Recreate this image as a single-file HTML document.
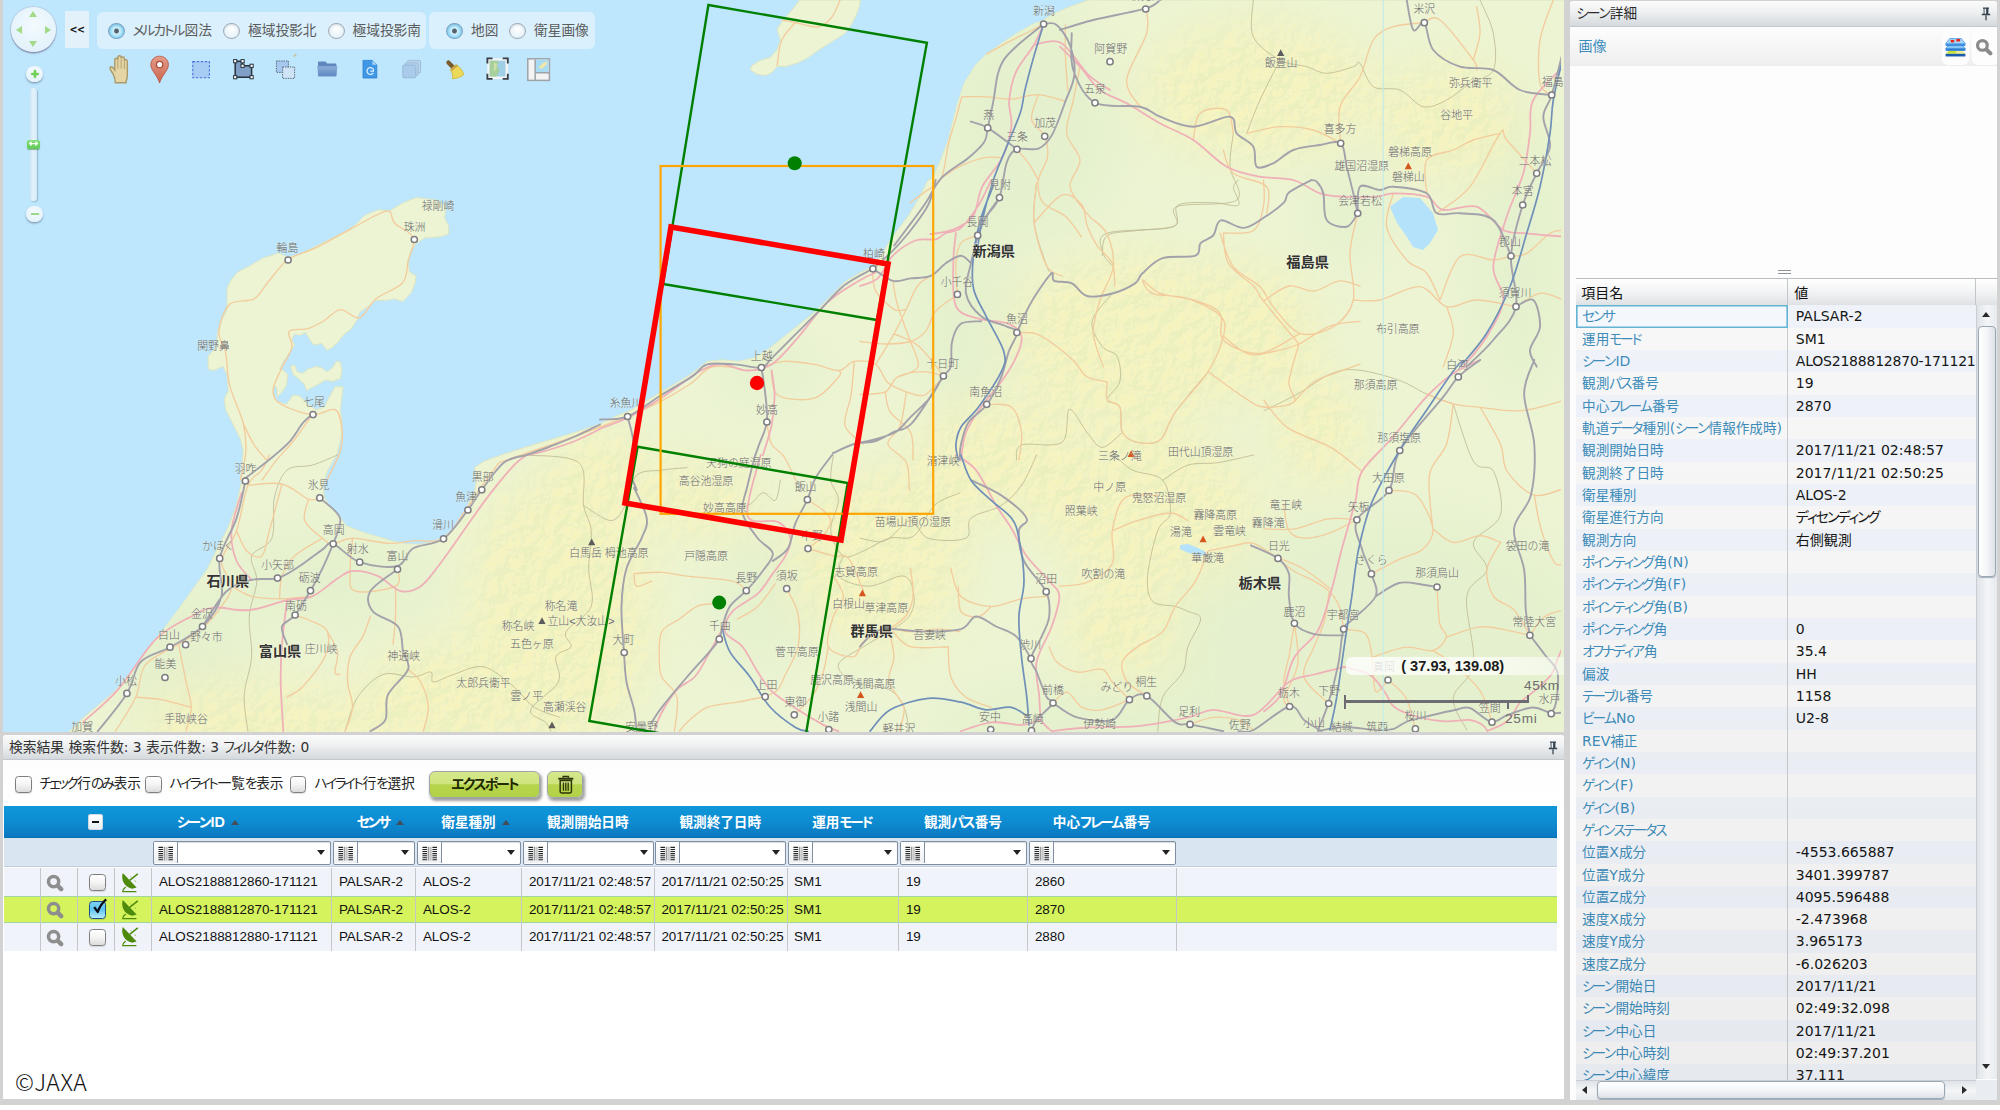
<!DOCTYPE html>
<html lang="ja"><head><meta charset="utf-8"><title>シーン詳細</title>
<style>
html,body{margin:0;padding:0;}
body{width:2000px;height:1110px;overflow:hidden;background:#d2d2d2;position:relative;font-family:"Liberation Sans","Noto Sans CJK JP",sans-serif;font-size:13.4px;color:#222;}
#map{position:absolute;left:3px;top:0;width:1561px;height:732px;overflow:hidden;background:#bee7fd;}
.mapsvg{position:absolute;left:0;top:0;}
.k{letter-spacing:-2px;font-kerning:none;margin-right:1.3px;}
.l{font-family:"DejaVu Sans",sans-serif;font-size:14px;}
.jp{font-feature-settings:"palt";}
#rp{position:absolute;left:1570px;top:1px;width:427.4px;height:1099px;background:#fdfdfd;font-feature-settings:"palt";border-radius:3px 3px 0 0;overflow:hidden;}
.rp-head{position:absolute;left:0;top:0;width:100%;height:26px;background:linear-gradient(#fbfbfb,#eef0f1 45%,#d4d9dd);border-bottom:1px solid #c3c9ce;box-sizing:border-box;}
.rp-title{position:absolute;left:6.5px;top:4px;font-size:13.6px;line-height:18px;color:#2b2b2b;}
.pin{position:absolute;}
.rp-img{position:absolute;left:0;top:26px;width:100%;height:39px;background:linear-gradient(#fdfdfd,#f6f6f6 50%,#eeeeee);}
.rp-img .lbl{position:absolute;left:8.5px;top:9px;font-size:14px;line-height:20px;color:#3c8cbc;}
.ibtn{position:absolute;top:3px;width:26.5px;height:35px;background:#fdfdfd;border-radius:6px;}
.rp-split{position:absolute;left:208px;top:268.5px;width:13px;}
.rp-split i{display:block;height:1px;background:#8e9499;margin-bottom:2px;}
.pg{position:absolute;left:6.3px;top:277px;width:421.5px;height:822px;}
.pg-head{position:absolute;left:0;top:0;width:100%;height:27px;border-top:1px solid #b9bdc1;background:linear-gradient(#ffffff,#f2f3f4 50%,#dfe2e5);font-size:14px;color:#111;box-sizing:border-box;}
.pg-head div{position:absolute;top:0;height:26px;line-height:29px;box-sizing:border-box;padding-left:5px;border-right:1px solid #c2c6ca;}
.pg-head .c1{left:0;width:212px;}
.pg-head .c2{left:212px;width:187.3px;padding-left:6px;}
.pg-head .c3{left:399.3px;width:22px;border-right:0;}
.pg-body{position:absolute;left:0;top:27.3px;width:399.3px;height:774.7px;overflow:hidden;background:#f3f3f3;}
.pg-body .r{position:relative;height:22.33px;line-height:23.6px;white-space:nowrap;}
.pg-body .c1{position:absolute;left:0;top:0;width:211.5px;height:100%;padding-left:5.8px;box-sizing:border-box;color:#3d8cba;background:#f7f7f7;border-right:1px solid #c8cbcf;font-size:13.6px;line-height:23.8px;}
.pg-body .c2{position:absolute;left:211.5px;top:0;width:187.8px;height:100%;padding-left:8px;box-sizing:border-box;color:#161616;background:#f7f7f7;font-family:"DejaVu Sans","Noto Sans CJK JP",sans-serif;font-size:14px;overflow:hidden;}
.pg-body .alt .c1{background:#eff3f9;}
.pg-body .alt .c2{background:#eff3f9;}
.pg-body .sel .c1{background:#f4f8fc;box-shadow:inset 0 0 0 1.6px #62b4d2;border-right:0;}
.vs{position:absolute;left:399.3px;top:27.3px;width:22.2px;height:773.5px;background:linear-gradient(90deg,#dfe3e8,#f3f5f7 50%,#e6e9ed);border-left:1px solid #c9ced4;box-sizing:border-box;}
.hs{position:absolute;left:0;top:801.8px;width:399.3px;height:20.4px;background:linear-gradient(#dfe3e8,#f3f5f7 50%,#e6e9ed);border-top:1px solid #c9ced4;box-sizing:border-box;}
.corner{position:absolute;left:399.3px;top:801.8px;width:22.2px;height:20.4px;background:#e9edf2;}
.vs .thumb{position:absolute;left:1.5px;top:21px;width:17.5px;height:251px;border:1px solid #9aa7b4;border-radius:4px;background:linear-gradient(90deg,#ffffff,#f4f6f8 50%,#dde2e7);box-sizing:border-box;box-shadow:0 1px 1px rgba(90,110,130,.5);}
.hs .thumb{position:absolute;left:21px;top:0.6px;width:348px;height:18px;border:1px solid #9aa7b4;border-radius:4px;background:linear-gradient(#ffffff,#f4f6f8 50%,#dde2e7);box-sizing:border-box;box-shadow:0 1px 1px rgba(90,110,130,.5);}
.arr{position:absolute;width:0;height:0;border:4.6px solid transparent;}
.arr.up{left:5.8px;top:6.6px;border-bottom:5.5px solid #2a2a2a;border-top:0;}
.arr.dn{left:5.6px;top:759px;border-top:5.5px solid #2a2a2a;border-bottom:0;}
.arr.lf{left:6px;top:5px;border-right:5.5px solid #2a2a2a;border-left:0;}
.arr.rt{left:386px;top:5px;border-left:5.5px solid #2a2a2a;border-right:0;}
#bp{position:absolute;left:2.6px;top:734.6px;width:1561.3px;height:364.4px;background:#fff;font-feature-settings:"palt";border-radius:3px 3px 0 0;overflow:hidden;}
.bp-head{position:absolute;left:0;top:0;width:100%;height:25.8px;background:linear-gradient(#fbfbfb,#eef0f1 45%,#d4d9dd);border-bottom:1px solid #c3c9ce;box-sizing:border-box;}
.bp-head .t{position:absolute;left:6.4px;top:3.4px;font-size:13.8px;line-height:18px;color:#333;font-family:"DejaVu Sans","Noto Sans CJK JP",sans-serif;white-space:nowrap;}
.bp-tool{position:absolute;left:0;top:25.8px;width:100%;height:45px;background:linear-gradient(#fdfdfd,#fff);}
.cb{position:absolute;width:16.5px;height:16.5px;box-sizing:border-box;border:1.3px solid #7e7e7e;border-radius:3.5px;background:linear-gradient(#ffffff,#f4f4f4 50%,#dcdcdc);box-shadow:0 1px 1px rgba(0,0,0,.12);}
.cl{position:absolute;top:14px;font-size:13.6px;line-height:20px;color:#222;white-space:nowrap;}
.btn{position:absolute;top:10.3px;height:27px;box-sizing:border-box;border:1px solid #9fa5a8;border-radius:6px;background:linear-gradient(#d4e88c 0%,#cfe47e 47%,#b7d54c 51%,#b3d248 100%);box-shadow:1.5px 2.5px 3px rgba(0,0,0,.38);}
.btn.exp span{position:absolute;left:0;width:100%;text-align:center;top:1px;font-size:14px;line-height:20px;font-weight:bold;color:#1f2a00;}
.grid{position:absolute;left:1px;top:71.4px;width:1553.4px;height:150px;}
.gh{position:absolute;left:0;top:0;width:100%;height:32px;background:linear-gradient(#1097da,#0d8cd2 50%,#0a78c0);border-bottom:1px solid #0a6fb0;box-sizing:border-box;}
.ht{position:absolute;top:0;height:32px;line-height:33px;text-align:center;color:#fff;font-weight:bold;font-size:13.6px;white-space:nowrap;}
.ht span{position:relative;display:inline-block;}
.ht .l{font-family:"Liberation Sans",sans-serif;font-size:14.4px;}
.sa{position:absolute;left:100%;top:14px;margin-left:6px;width:0;height:0;border:4.7px solid transparent;border-top:0;border-bottom:5.4px solid #444c58;}
.hcb{position:absolute;left:84.2px;top:8.2px;width:15.6px;height:15.6px;background:linear-gradient(#fff,#e8eef4);border:1px solid #cfd9e2;border-radius:2px;box-sizing:border-box;}
.hcb i{position:absolute;left:3.2px;top:5.6px;width:7.4px;height:2.4px;background:#111;}
.gf{position:absolute;left:0;top:32px;width:100%;height:29px;background:#d9e5f0;border-bottom:1px solid #c2cedb;box-sizing:border-box;}
.fb{position:absolute;top:3.2px;height:23.6px;box-sizing:border-box;border:1.2px solid #7f8ea0;border-radius:2px;background:#fff;box-shadow:inset 0 1px 1px rgba(0,0,0,.15);}
.fi{position:absolute;left:0;top:0;width:24px;height:21.2px;border-right:1.2px solid #7f8ea0;background:linear-gradient(#fff,#eef1f4);box-sizing:border-box;}
.fi svg{position:absolute;left:3px;top:3.4px;width:17.4px;height:15.4px;}
.da{position:absolute;right:5px;top:8.2px;width:0;height:0;border:4.6px solid transparent;border-bottom:0;border-top:5.4px solid #222;}
.gr{position:absolute;left:0;width:100%;height:27.5px;background:#f0f4fa;line-height:28px;font-size:13.45px;color:#111;}
.gr.hl{background:#d4f35c;box-shadow:inset 0 1px 0 #9fd6a0, inset 0 -1px 0 #9fd6a0;}
.vl{position:absolute;top:0;width:1px;height:100%;background:#c4c6c9;}
.gc{position:absolute;top:0;height:100%;box-sizing:border-box;padding-left:6.4px;border-left:1px solid #c4c6c9;white-space:nowrap;overflow:hidden;}
.mg{position:absolute;left:42.6px;top:5.6px;}
.rc{left:85px;top:5.4px;width:17.4px;height:17.4px;}
.rc.on{background:linear-gradient(#7fd0f3,#5cc4f0 45%,#b5ebfb);border-color:#1d4f8c;}
.ck{position:absolute;left:86.6px;top:1.4px;}
.sat{position:absolute;left:117.8px;top:3.2px;}
.jaxa{position:absolute;left:12.4px;top:332.4px;font-family:"Noto Sans CJK JP",sans-serif;font-weight:300;font-size:23px;line-height:28px;color:#111;letter-spacing:0.3px;}
/* map controls: coordinates relative to #map (left 3) */
.pan{position:absolute;left:8px;top:7px;width:45px;height:45px;border-radius:50%;background:radial-gradient(circle at 50% 40%,#f3fafe,#e4f2fb 70%,#d9ebf7);box-shadow:0 1.5px 1.5px rgba(110,110,150,.7),0 0 0 1px rgba(185,200,220,.75);}
.pan i{position:absolute;width:0;height:0;border:4.2px solid transparent;}
.pan .u{left:18.3px;top:4.4px;border-bottom:6px solid #a2da8a;border-top:0;}
.pan .d{left:18.3px;bottom:4.6px;border-top:6px solid #a2da8a;border-bottom:0;}
.pan .l{left:4.6px;top:18.6px;border-right:6px solid #a2da8a;border-left:0;}
.pan .r{right:4.6px;top:18.6px;border-left:6px solid #a2da8a;border-right:0;}
.zb{position:absolute;left:23.4px;width:16.4px;height:16.4px;border-radius:50%;background:radial-gradient(circle at 50% 35%,#f4fafe,#e6f3fb 70%,#d9eaf6);box-shadow:0 1.5px 2px rgba(90,110,140,.6);}
.zb svg{position:absolute;left:2.2px;top:2.2px;}
.ztrack{position:absolute;left:27.4px;top:88px;width:6.6px;height:113px;border-radius:3.5px;background:linear-gradient(90deg,#cfe6f5,#e4f2fb 50%,#d3e8f6);box-shadow:1px 1px 1.5px rgba(110,140,170,.55);}
.zh{position:absolute;left:24px;top:139.6px;width:13.4px;height:9.6px;border-radius:2px;background:linear-gradient(#86e07a,#5fc957);box-shadow:0 1px 1px rgba(60,120,60,.5);}
.zh svg{position:absolute;left:.2px;top:-.2px;}
.cbtn{position:absolute;left:61.6px;top:11.4px;width:24.6px;height:36.8px;background:#e3f1fb;color:#111;font-weight:bold;font-size:9.6px;line-height:38px;text-align:center;letter-spacing:-.6px;font-family:"DejaVu Sans",sans-serif;}
.rpanel{position:absolute;top:12.4px;height:37px;border-radius:6px;background:rgba(236,246,253,.62);font-feature-settings:"palt";}
.rd{position:absolute;top:10.4px;width:16.6px;height:16.6px;border-radius:50%;box-sizing:border-box;border:1.2px solid #a3adb8;background:radial-gradient(circle at 50% 35%,#ffffff,#eaf4fb 60%,#d3e4f1);box-shadow:inset 0 1px 2px rgba(0,0,0,.12);}
.rd.on{border-color:#7fa3c4;background:radial-gradient(circle at 50% 50%,#56626e 0,#56626e 1.9px,#d2f1fc 3px,#9bdcf6 6px,#6cc6f1 8.5px);}
.rt{position:absolute;top:8.8px;font-size:13.7px;line-height:20px;color:#5c5c5c;white-space:nowrap;}
.tools{position:absolute;left:98px;top:50px;}
.coord{position:absolute;left:1342.6px;top:657.4px;width:222px;height:17.2px;border-radius:6px 0 0 6px;background:linear-gradient(90deg,rgba(255,255,255,.78),rgba(255,255,255,.72) 60%,rgba(255,255,255,.45));font-weight:bold;font-size:14.6px;line-height:18.6px;color:#1c1c1c;padding-left:55.6px;box-sizing:border-box;white-space:nowrap;}
.scale{position:absolute;left:1340px;top:676px;width:220px;height:54px;color:#6e6e6e;font-size:13.6px;}
.scale .km{position:absolute;left:181px;top:1.6px;letter-spacing:.6px;}
.scale .mi{position:absolute;left:162px;top:35.4px;letter-spacing:.8px;}
.scale .bar{position:absolute;left:1px;top:24.4px;width:185px;height:2.3px;background:#6c6c72;}
.scale .t1{position:absolute;left:1px;top:18.8px;width:2px;height:14px;background:#6c6c72;}
.scale .t2{position:absolute;left:184px;top:18.8px;width:2px;height:7.6px;background:#6c6c72;}
.scale .t3{position:absolute;left:163.6px;top:26px;width:2px;height:6.8px;background:#6c6c72;}

.botw{position:absolute;left:0;top:1104.6px;width:2000px;height:6px;background:#fff;}
.pg-body::after{content:"";position:absolute;left:0;top:0;width:100%;height:100%;background:linear-gradient(rgba(0,0,0,0),rgba(0,0,0,.012) 40%,rgba(0,0,0,.04));pointer-events:none;}
.cl .k{letter-spacing:-2.5px;}

</style></head>
<body>
<div id="map">
<svg class="mapsvg" width="1561" height="732" viewBox="3 0 1561 732">
<defs>
<radialGradient id="mt1" cx="0.5" cy="0.5" r="0.5"><stop offset="0" stop-color="#f4efb4" stop-opacity="0.95"/><stop offset="0.6" stop-color="#f2f0bd" stop-opacity="0.6"/><stop offset="1" stop-color="#f0f2c4" stop-opacity="0"/></radialGradient>
<filter id="blur2"><feGaussianBlur stdDeviation="0.6"/></filter>
<filter id="blur1" x="0" y="0" width="100%" height="100%" filterUnits="userSpaceOnUse"><feGaussianBlur stdDeviation="0.45"/></filter>
<filter id="blurT" x="-100" y="-100" width="1800" height="1000" filterUnits="userSpaceOnUse"><feGaussianBlur stdDeviation="22"/></filter>
<filter id="relief" x="0" y="0" width="1570" height="740" filterUnits="userSpaceOnUse" color-interpolation-filters="sRGB">
<feTurbulence type="fractalNoise" baseFrequency="0.07" numOctaves="4" seed="7" result="n"/>
<feDiffuseLighting in="n" surfaceScale="6" diffuseConstant="0.8" lighting-color="#ffffff" result="l"><feDistantLight azimuth="225" elevation="52"/></feDiffuseLighting>
<feColorMatrix in="l" type="matrix" values="0 0 0 0 0.985  0 0 0 0 0.955  0 0 0 0 0.68  4.5 0 0 0 -2.84"/>
</filter>
<filter id="relief2" x="0" y="0" width="1570" height="740" filterUnits="userSpaceOnUse" color-interpolation-filters="sRGB">
<feTurbulence type="fractalNoise" baseFrequency="0.07" numOctaves="4" seed="7" result="n"/>
<feDiffuseLighting in="n" surfaceScale="6" diffuseConstant="0.8" lighting-color="#ffffff" result="l"><feDistantLight azimuth="225" elevation="52"/></feDiffuseLighting>
<feColorMatrix in="l" type="matrix" values="0 0 0 0 0.84  0 0 0 0 0.90  0 0 0 0 0.70  -4.5 0 0 0 2.84"/>
</filter>
<mask id="mtmask" maskUnits="userSpaceOnUse" x="0" y="0" width="1570" height="740"><g filter="url(#blurT)" fill="#fff"><use href="#mtblobs"/></g></mask>
<clipPath id="landclip"><path d="M68.9 731.9 L82.4 718.4 L98.6 704.9 L114.9 691.4 L128.4 675.1 L144.6 653.5 L163.5 629.2 L179.7 607.6 L193.2 588.6 L206.8 569.7 L217.6 548.1 L228.4 526.5 L236.5 504.9 L241.9 480.5 L240.5 480.0 L243.2 450.3 L240.5 439.5 L232.4 423.2 L225.7 409.7 L224.3 398.9 L228.4 390.8 L227.0 374.6 L223.0 366.5 L213.5 370.5 L208.1 369.2 L208.1 355.7 L216.2 347.6 L217.6 331.4 L221.6 320.5 L227.0 309.7 L227.0 298.9 L227.0 288.1 L231.1 280.0 L237.8 271.9 L248.6 266.5 L262.2 258.4 L278.4 253.0 L287.8 257.0 L300.0 254.3 L313.5 247.6 L327.0 240.8 L343.2 232.7 L354.1 225.9 L364.9 215.1 L378.4 209.7 L389.2 211.1 L402.7 203.0 L416.2 197.6 L427.0 198.9 L437.8 200.3 L445.9 207.0 L444.6 217.8 L448.6 225.9 L448.6 234.1 L440.5 236.8 L424.3 238.1 L416.2 243.5 L410.8 250.3 L408.1 261.1 L409.5 271.9 L416.2 275.9 L414.9 284.1 L410.8 293.5 L402.7 301.6 L394.6 298.9 L386.5 300.3 L375.7 300.3 L367.6 307.0 L359.5 312.4 L356.8 320.5 L351.4 328.6 L343.2 335.4 L337.8 342.2 L332.4 347.6 L327.0 350.3 L321.6 343.5 L313.5 344.9 L308.1 336.8 L305.4 332.7 L300.0 335.4 L294.6 334.1 L291.9 339.5 L294.6 344.9 L289.2 353.0 L283.8 361.1 L279.7 369.2 L283.8 370.5 L287.8 374.6 L286.5 385.4 L281.1 393.5 L277.0 396.2 L277.0 388.1 L274.3 385.4 L273.0 393.5 L277.0 401.6 L286.5 404.3 L293.2 394.9 L300.0 396.2 L308.1 404.3 L316.2 409.7 L324.3 407.0 L329.7 396.2 L335.1 386.8 L343.2 386.8 L341.9 396.2 L340.5 409.7 L341.9 423.2 L341.3 436.8 L336.8 455.1 L327.6 470.4 L323.0 485.8 L324.5 498.0 L330.6 507.2 L339.8 516.4 L345.9 525.6 L361.3 531.7 L376.6 536.3 L391.9 540.9 L407.2 544.0 L422.5 544.0 L434.8 540.9 L444.0 536.3 L453.1 528.6 L462.3 516.4 L468.5 504.1 L474.6 491.9 L476.1 479.6 L474.6 467.4 L483.8 461.3 L499.1 455.7 L514.4 450.8 L529.7 445.9 L545.0 441.3 L560.3 436.8 L575.7 432.2 L600.0 424.1 L615.3 416.5 L630.6 410.3 L645.9 401.1 L661.3 392.0 L676.6 382.8 L691.9 373.6 L707.2 361.3 L722.5 359.8 L737.8 361.3 L753.1 358.3 L768.5 349.1 L783.8 336.8 L799.1 324.6 L814.4 312.3 L829.7 297.0 L845.0 281.7 L860.3 272.5 L872.6 266.4 L881.8 254.1 L891.0 238.8 L900.2 226.6 L909.3 214.3 L918.5 199.0 L927.7 180.6 L932.5 177.9 L941.5 157.7 L948.3 139.6 L952.8 121.6 L957.3 103.6 L964.1 83.3 L975.3 65.3 L986.6 54.1 L1002.3 42.8 L1015.9 33.8 L1031.6 24.8 L1042.9 20.3 L1054.1 13.5 L1069.9 6.8 L1087.9 0.0 L1570 0 L1570 740 L60 740 Z"/><path d="M290.5 366.5 L294.6 365.1 L297.3 371.9 L302.7 373.2 L308.1 369.2 L316.2 366.5 L321.6 367.8 L327.0 371.9 L332.4 367.8 L336.5 361.1 L340.5 362.4 L341.9 369.2 L340.5 378.6 L332.4 381.4 L325.7 380.0 L318.9 384.1 L310.8 388.1 L306.8 390.8 L304.1 384.1 L298.6 378.6 L293.2 374.6 Z"/><path d="M799.6 0.0 L792.9 9.0 L782.7 20.3 L777.1 29.3 L780.5 40.5 L777.1 49.5 L770.4 57.4 L759.1 60.8 L752.3 65.3 L750.1 69.8 L756.8 74.3 L765.9 75.5 L772.6 72.1 L777.1 66.4 L786.1 66.4 L797.4 63.1 L808.6 57.4 L817.7 50.7 L826.7 45.0 L835.7 39.4 L844.7 33.8 L851.4 24.8 L855.9 15.8 L859.3 6.8 L860.5 0.0 Z"/></clipPath>
</defs>
<rect x="0" y="0" width="1570" height="740" fill="#bee7fd"/>
<g filter="url(#blur2)">
<path d="M68.9 731.9 L82.4 718.4 L98.6 704.9 L114.9 691.4 L128.4 675.1 L144.6 653.5 L163.5 629.2 L179.7 607.6 L193.2 588.6 L206.8 569.7 L217.6 548.1 L228.4 526.5 L236.5 504.9 L241.9 480.5 L240.5 480.0 L243.2 450.3 L240.5 439.5 L232.4 423.2 L225.7 409.7 L224.3 398.9 L228.4 390.8 L227.0 374.6 L223.0 366.5 L213.5 370.5 L208.1 369.2 L208.1 355.7 L216.2 347.6 L217.6 331.4 L221.6 320.5 L227.0 309.7 L227.0 298.9 L227.0 288.1 L231.1 280.0 L237.8 271.9 L248.6 266.5 L262.2 258.4 L278.4 253.0 L287.8 257.0 L300.0 254.3 L313.5 247.6 L327.0 240.8 L343.2 232.7 L354.1 225.9 L364.9 215.1 L378.4 209.7 L389.2 211.1 L402.7 203.0 L416.2 197.6 L427.0 198.9 L437.8 200.3 L445.9 207.0 L444.6 217.8 L448.6 225.9 L448.6 234.1 L440.5 236.8 L424.3 238.1 L416.2 243.5 L410.8 250.3 L408.1 261.1 L409.5 271.9 L416.2 275.9 L414.9 284.1 L410.8 293.5 L402.7 301.6 L394.6 298.9 L386.5 300.3 L375.7 300.3 L367.6 307.0 L359.5 312.4 L356.8 320.5 L351.4 328.6 L343.2 335.4 L337.8 342.2 L332.4 347.6 L327.0 350.3 L321.6 343.5 L313.5 344.9 L308.1 336.8 L305.4 332.7 L300.0 335.4 L294.6 334.1 L291.9 339.5 L294.6 344.9 L289.2 353.0 L283.8 361.1 L279.7 369.2 L283.8 370.5 L287.8 374.6 L286.5 385.4 L281.1 393.5 L277.0 396.2 L277.0 388.1 L274.3 385.4 L273.0 393.5 L277.0 401.6 L286.5 404.3 L293.2 394.9 L300.0 396.2 L308.1 404.3 L316.2 409.7 L324.3 407.0 L329.7 396.2 L335.1 386.8 L343.2 386.8 L341.9 396.2 L340.5 409.7 L341.9 423.2 L341.3 436.8 L336.8 455.1 L327.6 470.4 L323.0 485.8 L324.5 498.0 L330.6 507.2 L339.8 516.4 L345.9 525.6 L361.3 531.7 L376.6 536.3 L391.9 540.9 L407.2 544.0 L422.5 544.0 L434.8 540.9 L444.0 536.3 L453.1 528.6 L462.3 516.4 L468.5 504.1 L474.6 491.9 L476.1 479.6 L474.6 467.4 L483.8 461.3 L499.1 455.7 L514.4 450.8 L529.7 445.9 L545.0 441.3 L560.3 436.8 L575.7 432.2 L600.0 424.1 L615.3 416.5 L630.6 410.3 L645.9 401.1 L661.3 392.0 L676.6 382.8 L691.9 373.6 L707.2 361.3 L722.5 359.8 L737.8 361.3 L753.1 358.3 L768.5 349.1 L783.8 336.8 L799.1 324.6 L814.4 312.3 L829.7 297.0 L845.0 281.7 L860.3 272.5 L872.6 266.4 L881.8 254.1 L891.0 238.8 L900.2 226.6 L909.3 214.3 L918.5 199.0 L927.7 180.6 L932.5 177.9 L941.5 157.7 L948.3 139.6 L952.8 121.6 L957.3 103.6 L964.1 83.3 L975.3 65.3 L986.6 54.1 L1002.3 42.8 L1015.9 33.8 L1031.6 24.8 L1042.9 20.3 L1054.1 13.5 L1069.9 6.8 L1087.9 0.0 L1570 0 L1570 740 L60 740 Z" fill="#ecf4d3" stroke="#dbe5c4" stroke-width="1"/>
<path d="M290.5 366.5 L294.6 365.1 L297.3 371.9 L302.7 373.2 L308.1 369.2 L316.2 366.5 L321.6 367.8 L327.0 371.9 L332.4 367.8 L336.5 361.1 L340.5 362.4 L341.9 369.2 L340.5 378.6 L332.4 381.4 L325.7 380.0 L318.9 384.1 L310.8 388.1 L306.8 390.8 L304.1 384.1 L298.6 378.6 L293.2 374.6 Z" fill="#ecf4d3" stroke="#dbe5c4" stroke-width="1"/>
<path d="M799.6 0.0 L792.9 9.0 L782.7 20.3 L777.1 29.3 L780.5 40.5 L777.1 49.5 L770.4 57.4 L759.1 60.8 L752.3 65.3 L750.1 69.8 L756.8 74.3 L765.9 75.5 L772.6 72.1 L777.1 66.4 L786.1 66.4 L797.4 63.1 L808.6 57.4 L817.7 50.7 L826.7 45.0 L835.7 39.4 L844.7 33.8 L851.4 24.8 L855.9 15.8 L859.3 6.8 L860.5 0.0 Z" fill="#ecf4d3" stroke="#dbe5c4" stroke-width="1"/>
</g>
<g clip-path="url(#landclip)">
<g filter="url(#blurT)">
<!-- plains (greener) -->
<g fill="#e5f1ce">
<ellipse cx="330" cy="580" rx="110" ry="50"/>
<ellipse cx="180" cy="660" rx="70" ry="80"/>
<ellipse cx="1030" cy="120" rx="90" ry="120"/>
<ellipse cx="960" cy="300" rx="50" ry="110"/>
<ellipse cx="1380" cy="640" rx="220" ry="130"/>
<ellipse cx="1130" cy="730" rx="200" ry="50"/>
<ellipse cx="760" cy="600" rx="45" ry="70"/>
<ellipse cx="1350" cy="210" rx="40" ry="50"/>
<ellipse cx="1520" cy="250" rx="50" ry="150"/>
<ellipse cx="770" cy="370" rx="50" ry="30"/>
</g>
<!-- mountains (yellow) -->
<g id="mtblobs" fill="#f5f4c4" opacity=".95">
<ellipse cx="560" cy="610" rx="95" ry="140"/>
<ellipse cx="600" cy="470" rx="50" ry="45"/>
<ellipse cx="700" cy="500" rx="60" ry="40"/>
<ellipse cx="880" cy="560" rx="90" ry="90"/>
<ellipse cx="1000" cy="460" rx="90" ry="60"/>
<ellipse cx="1150" cy="510" rx="110" ry="80"/>
<ellipse cx="1130" cy="340" rx="120" ry="90"/>
<ellipse cx="1260" cy="90" rx="120" ry="70"/>
<ellipse cx="1450" cy="120" rx="70" ry="60"/>
<ellipse cx="1320" cy="430" rx="45" ry="60"/>
<ellipse cx="260" cy="730" rx="120" ry="50"/>
<ellipse cx="450" cy="700" rx="90" ry="60"/>
<ellipse cx="1120" cy="630" rx="60" ry="50"/>
<ellipse cx="1230" cy="330" rx="90" ry="70"/>
</g>
</g>
<g mask="url(#mtmask)"><rect x="0" y="0" width="1570" height="740" filter="url(#relief)" opacity=".5"/><rect x="0" y="0" width="1570" height="740" filter="url(#relief2)" opacity=".32"/></g>
</g>

<g filter="url(#blur1)">
<path d="M247.9 731.2 C247.3 725.1 243.6 707.1 244.2 694.7 C244.8 682.3 250.9 669.8 251.7 656.8 C252.5 643.8 248.3 629.1 249.2 616.5 C250.0 603.9 256.4 591.2 256.8 581.1 C257.2 571.0 249.2 563.0 251.7 555.9 C254.2 548.8 268.1 547.9 271.9 538.2 C275.7 528.5 271.9 509.2 274.4 497.9 C276.9 486.5 280.7 475.6 287.0 470.1 C293.3 464.6 303.9 467.6 312.3 465.1 C320.7 462.6 333.3 456.7 337.5 455.0 M345.1 731.2 C347.2 725.5 351.4 706.7 357.7 697.2 C364.0 687.8 373.6 677.9 382.9 674.5 C392.1 671.1 405.2 677.4 413.2 677.0 C421.2 676.6 427.4 671.2 430.8 672.0 C434.2 672.8 429.6 681.6 433.4 682.0 C437.2 682.4 445.1 677.0 453.5 674.5 C461.9 672.0 473.7 664.8 483.8 666.9 C493.9 669.0 505.7 680.4 514.1 687.1 C522.5 693.8 526.6 702.2 534.3 707.3 C541.9 712.3 555.7 715.7 560.0 717.4 M523.1 455.0 C532.4 456.3 568.5 454.2 578.6 462.6 C588.7 471.0 581.5 494.1 583.6 505.5 C585.7 516.9 590.4 520.2 591.2 530.7 C592.1 541.2 588.7 555.9 588.7 568.5 C588.7 581.1 595.0 595.9 591.2 606.4 C587.4 616.9 569.4 624.9 566.0 631.6 C562.6 638.3 572.7 642.5 571.0 646.7 C569.3 650.9 558.0 650.9 555.9 656.8 C553.8 662.7 562.6 673.2 558.4 682.0 C554.2 690.8 532.7 703.1 530.6 709.8 C528.5 716.5 542.4 718.8 545.8 722.4 C549.2 726.0 550.0 729.7 550.8 731.2 M583.6 505.5 C588.2 508.0 604.2 521.0 611.4 520.6 C618.5 520.2 622.3 510.5 626.5 502.9 C630.7 495.3 630.7 480.7 636.6 475.2 C642.5 469.7 653.4 471.4 661.8 470.1 C670.2 468.8 682.8 468.0 687.0 467.6 M780.4 480.2 C779.5 483.6 778.2 498.3 775.3 500.4 C772.3 502.5 767.3 491.9 762.7 492.8 C758.1 493.7 756.0 501.7 747.6 505.5 C739.2 509.3 722.4 514.2 712.3 515.5 C702.2 516.8 691.2 513.4 687.0 513.0 M833.4 455.0 C833.0 459.2 830.0 472.6 830.8 480.2 C831.6 487.8 838.4 492.0 838.4 500.4 C838.4 508.8 829.9 521.5 830.8 530.7 C831.6 540.0 838.0 552.5 843.5 555.9 C849.0 559.3 856.0 553.8 863.6 550.9 C871.2 548.0 880.5 540.7 888.9 538.2 C897.3 535.7 906.5 541.2 914.1 535.7 C921.7 530.2 926.6 512.6 934.3 505.5 C941.9 498.4 955.7 494.9 960.0 492.8 M843.5 555.9 C842.6 559.3 834.2 571.0 838.4 576.1 C842.6 581.2 857.8 586.2 868.7 586.2 C879.6 586.2 896.4 574.4 904.0 576.1 C911.6 577.8 913.3 589.6 914.1 596.3 C914.9 603.0 913.2 610.6 909.0 616.5 C904.8 622.4 896.5 626.6 888.9 631.6 C881.3 636.6 872.0 641.2 863.6 646.7 C855.2 652.2 840.1 658.5 838.4 664.4 C836.7 670.3 845.1 677.8 853.5 682.0 C861.9 686.2 880.5 685.4 888.9 689.6 C897.3 693.8 900.6 700.4 904.0 707.3 C907.4 714.2 908.2 727.2 909.0 731.2 M860.0 538.2 C864.2 538.6 876.8 543.7 885.2 540.8 C893.6 537.9 903.4 521.0 910.5 520.6 C917.6 520.2 918.9 535.3 928.1 538.2 C937.4 541.1 958.9 541.6 966.0 538.2 C973.1 534.9 965.1 523.6 971.0 518.1 C976.9 512.6 992.9 511.0 1001.3 505.5 C1009.7 500.0 1015.6 493.7 1021.5 485.3 C1027.4 476.9 1034.1 460.1 1036.6 455.0 M1114.8 455.0 C1117.8 457.5 1124.5 465.9 1132.5 470.1 C1140.5 474.3 1156.4 473.1 1162.7 480.2 C1169.0 487.3 1171.1 504.6 1170.3 513.0 C1169.5 521.4 1161.5 520.2 1157.7 530.7 C1153.9 541.2 1148.4 564.3 1147.6 576.1 C1146.8 587.9 1148.0 596.2 1152.6 601.3 C1157.2 606.3 1169.4 604.7 1175.3 606.4 C1181.2 608.1 1183.8 609.3 1188.0 611.4 C1192.2 613.5 1200.6 613.1 1200.6 619.0 C1200.6 624.9 1191.0 637.9 1188.0 646.7 C1185.0 655.5 1187.1 663.6 1182.9 672.0 C1178.7 680.4 1166.9 687.3 1162.7 697.2 C1158.5 707.1 1158.5 725.5 1157.7 731.2 M1162.7 480.2 C1166.9 477.7 1178.8 468.0 1188.0 465.1 C1197.2 462.2 1207.3 464.3 1218.2 462.6 C1229.1 460.9 1247.6 456.3 1253.5 455.0 M1264.0 410.7 C1269.6 407.9 1286.5 400.0 1297.8 393.8 C1309.1 387.6 1321.5 377.4 1331.6 373.5 C1341.7 369.6 1347.3 369.0 1358.6 370.1 C1369.8 371.2 1387.8 376.4 1399.1 380.3 C1410.4 384.2 1417.2 389.9 1426.2 393.8 C1435.2 397.7 1448.7 402.2 1453.2 403.9 M1453.2 403.9 C1456.6 413.5 1466.8 450.1 1473.5 461.4 C1480.2 472.7 1489.2 462.5 1493.7 471.5 C1498.2 480.5 1503.9 503.6 1500.5 515.4 C1497.1 527.2 1475.8 533.4 1473.5 542.4 C1471.2 551.4 1488.1 560.5 1487.0 569.5 C1485.9 578.5 1469.0 580.7 1466.7 596.5 C1464.5 612.3 1475.8 647.2 1473.5 664.1 C1471.2 681.0 1454.3 686.8 1453.2 697.8 C1452.1 708.8 1464.5 724.5 1466.7 729.9 M1036.6 182.5 C1036.2 189.2 1032.4 209.0 1034.1 222.9 C1035.8 236.8 1043.8 257.4 1046.7 265.8 C1049.6 274.2 1050.9 272.1 1051.7 273.3 M1112.3 293.5 C1108.9 298.1 1093.8 312.5 1092.1 321.3 C1090.4 330.1 1098.0 340.6 1102.2 346.5 C1106.4 352.4 1114.4 350.7 1117.3 356.6 C1120.2 362.5 1121.5 374.7 1119.8 381.8 C1118.1 388.9 1107.2 395.3 1107.2 399.5 C1107.2 403.7 1117.3 401.5 1119.8 407.0 C1122.3 412.5 1119.5 426.4 1122.4 432.3 C1125.4 438.2 1131.2 441.1 1137.5 442.4 C1143.8 443.6 1153.9 444.9 1160.2 439.8 C1166.5 434.8 1167.3 423.5 1175.3 412.1 C1183.3 400.8 1202.6 378.4 1208.1 371.7 M1102.2 255.7 C1103.0 252.3 1101.3 239.7 1107.2 235.5 C1113.1 231.3 1126.2 232.2 1137.5 230.5 C1148.8 228.8 1168.6 229.6 1175.3 225.4 C1182.0 221.2 1171.6 209.0 1177.9 205.2 C1184.2 201.4 1203.1 202.7 1213.2 202.7 C1223.3 202.7 1235.0 207.7 1238.4 205.2 C1241.8 202.7 1233.4 191.8 1233.4 187.6 C1233.4 183.4 1237.6 181.3 1238.4 180.0 M1016.4 460.0 C1017.2 457.5 1013.9 447.8 1021.5 444.9 C1029.1 442.0 1053.8 448.3 1061.8 442.4 C1069.8 436.5 1065.2 411.3 1069.4 409.6 C1073.6 407.9 1081.5 426.0 1087.0 432.3 C1092.5 438.6 1096.3 447.4 1102.2 447.4 C1108.1 447.4 1119.0 434.8 1122.4 432.3 M1253.3 0.0 C1253.3 6.1 1248.8 26.7 1253.3 36.7 C1257.8 46.7 1271.1 55.0 1280.0 60.0 C1288.9 65.0 1298.9 64.5 1306.7 66.7 C1314.5 68.9 1318.9 73.3 1326.7 73.3 C1334.5 73.3 1347.8 68.4 1353.3 66.7 C1358.8 65.0 1356.7 60.0 1360.0 63.3 C1363.3 66.6 1366.6 82.2 1373.3 86.7 C1380.0 91.2 1391.7 86.7 1400.0 90.0 C1408.3 93.3 1415.5 105.0 1423.3 106.7 C1431.1 108.4 1438.9 103.9 1446.7 100.0 C1454.5 96.1 1462.2 88.3 1470.0 83.3 C1477.8 78.3 1489.4 78.3 1493.3 70.0 C1497.2 61.7 1495.5 45.0 1493.3 33.3 C1491.1 21.6 1482.2 5.5 1480.0 0.0 M1280.0 60.0 C1276.7 66.7 1265.5 87.8 1260.0 100.0 C1254.5 112.2 1248.9 127.8 1246.7 133.3 M1233.3 133.3 C1232.8 138.9 1229.4 155.6 1230.0 166.7 C1230.6 177.8 1245.6 193.3 1236.7 200.0 C1227.8 206.7 1187.3 202.2 1176.7 206.7 C1166.1 211.1 1185.0 222.3 1173.3 226.7 C1161.6 231.1 1118.4 228.9 1106.7 233.3 C1095.0 237.7 1102.2 247.7 1103.3 253.3 C1104.4 258.9 1111.6 264.5 1113.3 266.7" fill="none" stroke="#b9b48e" stroke-width="0.9" stroke-linecap="round" stroke-linejoin="round" opacity="0.85"/>
<path d="M499.0 462.6 C504.2 460.8 518.2 456.1 530.0 452.0 C541.8 447.9 558.3 442.2 570.0 438.0 C581.7 433.8 590.4 430.6 600.0 427.0 C609.6 423.4 623.0 418.2 627.6 416.5 M115.5 731.2 C118.9 725.5 130.6 708.3 135.7 697.2 C140.8 686.1 138.7 673.2 145.8 664.4 C153.0 655.6 169.3 650.1 178.6 644.2 C187.8 638.3 194.2 635.4 201.3 629.1 C208.5 622.8 216.5 613.5 221.5 606.4 C226.5 599.2 231.5 593.8 231.5 586.2 C231.5 578.6 220.7 570.2 221.5 561.0 C222.3 551.8 232.2 543.3 236.6 530.7 C241.0 518.1 243.7 495.4 247.9 485.3 C252.1 475.2 258.2 475.2 261.8 470.1 C265.4 465.1 268.1 457.5 269.4 455.0 M247.9 485.3 C253.6 485.1 271.9 481.7 282.0 484.0 C292.1 486.3 302.2 496.8 308.5 499.1 C314.8 501.4 317.9 498.1 319.8 497.9 M236.6 530.7 C238.3 534.1 242.5 546.7 246.7 550.9 C250.9 555.1 258.0 559.3 261.8 555.9 C265.6 552.5 266.0 542.7 269.4 530.7 C272.8 518.7 279.9 491.8 282.0 484.0 M231.5 586.2 C234.9 587.9 243.7 594.2 251.7 596.3 C259.7 598.4 269.4 598.8 279.5 598.8 C289.6 598.8 306.8 596.7 312.3 596.3 M308.5 499.1 C307.9 502.7 302.4 514.1 304.7 520.6 C307.0 527.1 317.6 534.3 322.4 538.2 C327.1 542.1 328.2 543.8 333.2 543.8 C338.2 543.8 343.5 538.3 352.6 538.2 C361.7 538.1 377.9 542.9 388.0 543.3 C398.1 543.7 403.9 541.5 413.2 540.8 C422.4 540.0 435.1 543.4 443.5 538.8 C451.9 534.2 457.7 521.1 463.6 513.0 C469.5 504.9 472.9 498.7 478.8 490.3 C484.7 481.9 495.6 467.2 499.0 462.6 M352.6 538.2 C352.2 543.7 349.7 562.2 350.1 571.0 C350.5 579.8 347.6 588.7 355.2 591.2 C362.8 593.7 388.4 589.9 395.5 586.2 C402.6 582.6 397.6 572.1 398.0 569.3 M395.5 586.2 C395.5 591.2 395.9 606.8 395.5 616.5 C395.1 626.2 393.4 639.6 393.0 644.2 M295.1 614.9 C298.0 616.0 306.9 618.7 312.3 621.5 C317.7 624.3 325.3 625.7 327.4 631.6 C329.5 637.5 329.1 647.5 324.9 656.8 C320.7 666.0 308.5 680.4 302.2 687.1 C295.9 693.8 289.5 695.5 287.0 697.2 M178.6 644.2 C179.8 650.5 184.0 671.5 186.1 682.0 C188.2 692.5 191.2 699.1 191.2 707.3 C191.2 715.5 186.9 727.2 186.1 731.2 M135.7 697.2 C139.9 697.6 151.7 698.0 160.9 699.7 C170.2 701.4 186.1 706.0 191.2 707.3 M370.3 616.5 C369.0 619.9 366.1 629.9 362.7 636.6 C359.3 643.3 352.6 649.2 350.1 656.8 C347.6 664.4 347.2 673.6 347.6 682.0 C348.0 690.4 353.0 699.1 352.6 707.3 C352.2 715.5 346.4 727.2 345.1 731.2 M408.1 669.4 C410.2 671.5 417.3 675.7 420.7 682.0 C424.1 688.3 427.9 699.1 428.3 707.3 C428.7 715.5 424.1 727.2 423.3 731.2 M279.5 598.8 C279.9 595.0 279.5 583.2 282.0 576.1 C284.5 569.0 287.9 562.2 294.6 555.9 C301.3 549.6 317.8 541.2 322.4 538.2 M327.4 631.6 C329.1 635.0 336.2 645.1 337.5 651.8 C338.8 658.5 334.6 668.2 335.0 672.0 C335.4 675.8 339.2 674.1 340.0 674.5 M240.5 480.0 C241.4 475.1 245.5 459.8 245.9 450.3 C246.3 440.8 245.9 434.0 243.2 423.2 C240.5 412.4 232.6 397.1 229.7 385.4 C226.8 373.7 227.5 362.0 225.7 353.0 C223.9 344.0 218.2 339.5 218.9 331.4 C219.6 323.3 223.8 309.7 229.7 304.3 C235.6 298.9 247.8 302.5 254.1 298.9 C260.4 295.3 262.0 289.2 267.6 282.7 C273.2 276.2 279.7 265.6 287.8 259.7 C295.9 253.8 305.6 252.8 316.2 247.6 C326.8 242.4 339.7 234.7 351.4 228.6 C363.1 222.5 379.3 212.0 386.5 211.1 C393.7 210.2 390.1 218.7 394.6 223.2 C399.1 227.7 411.2 231.8 413.5 238.1 C415.8 244.4 409.9 253.7 408.1 261.1 C406.3 268.5 408.1 276.4 402.7 282.7 C397.3 289.0 382.9 293.0 375.7 298.9 C368.5 304.8 365.4 316.0 359.5 317.8 C353.6 319.6 346.4 309.2 340.5 309.7 C334.6 310.1 329.7 317.4 324.3 320.5 C318.9 323.6 314.0 326.8 308.1 328.6 C302.2 330.4 291.9 328.2 289.2 331.4 C286.5 334.6 293.2 341.3 291.9 347.6 C290.5 353.9 284.2 362.0 281.1 369.2 C278.0 376.4 273.0 384.9 273.0 390.8 C273.0 396.7 274.6 400.3 281.1 404.3 C287.6 408.3 303.2 413.7 312.2 414.6 C321.2 415.5 330.2 407.4 335.1 409.7 C340.1 412.0 341.0 421.8 341.9 428.6 C342.8 435.4 343.0 441.7 340.5 450.3 C338.0 458.9 329.2 475.1 327.0 480.0 M243.2 423.2 C245.0 426.8 250.0 438.6 254.1 444.9 C258.2 451.2 265.4 458.4 267.6 461.1 M312.2 414.6 C309.3 418.8 300.7 431.8 294.6 439.5 C288.5 447.2 281.1 454.4 275.7 461.1 C270.3 467.9 264.4 476.9 262.2 480.0 M634.1 573.6 C638.7 573.4 653.0 571.9 661.8 572.3 C670.6 572.7 675.2 574.6 687.0 576.1 C698.8 577.6 722.6 578.7 732.5 581.1 C742.4 583.5 744.0 589.1 746.3 590.7 M634.1 573.6 C634.5 575.7 633.7 585.0 636.6 586.2 C639.5 587.5 649.2 582.0 651.7 581.1 M712.3 603.8 C709.8 604.2 702.6 603.9 697.1 606.4 C691.6 608.9 685.4 614.8 679.5 619.0 C673.6 623.2 665.2 625.3 661.8 631.6 C658.4 637.9 659.3 649.2 659.3 656.8 C659.3 664.4 658.8 670.3 661.8 677.0 C664.8 683.7 674.9 688.2 677.0 697.2 C679.1 706.2 674.8 725.5 674.4 731.2 M786.7 588.7 C788.6 592.9 796.1 604.2 798.0 613.9 C799.9 623.6 800.1 636.6 798.0 646.7 C795.9 656.8 788.8 667.4 785.4 674.5 C782.0 681.6 781.3 685.9 777.9 689.6 C774.5 693.3 767.3 695.5 765.2 696.7 M775.3 583.7 C772.4 587.5 764.0 600.5 757.7 606.4 C751.4 612.3 740.9 616.9 737.5 619.0 M808.1 548.6 C812.3 549.8 826.7 554.3 833.4 555.9 C840.1 557.5 843.5 552.5 848.5 558.4 C853.5 564.3 861.1 585.7 863.6 591.2 M833.4 576.1 C835.1 579.5 843.5 589.6 843.5 596.3 C843.5 603.0 835.9 608.1 833.4 616.5 C830.9 624.9 824.9 640.0 828.3 646.7 C831.6 653.4 847.6 657.6 853.5 656.8 C859.4 656.0 857.7 646.3 863.6 641.7 C869.5 637.1 881.3 630.8 888.9 629.1 C896.5 627.4 900.6 631.6 909.0 631.6 C917.4 631.6 930.8 629.1 939.3 629.1 C947.8 629.1 956.5 631.2 960.0 631.6 M807.4 499.7 C810.0 501.5 819.4 507.0 823.3 510.5 C827.2 514.0 830.8 516.4 830.8 520.6 C830.8 524.8 827.1 531.0 823.3 535.7 C819.5 540.4 810.6 546.5 808.1 548.6 M765.2 696.7 C760.6 697.6 747.2 700.4 737.5 702.2 C727.8 704.0 715.6 703.9 707.2 707.3 C698.8 710.7 691.6 718.4 687.0 722.4 C682.4 726.4 680.8 729.7 679.5 731.2 M828.3 646.7 C827.5 650.9 825.8 664.0 823.3 672.0 C820.8 680.0 818.0 687.6 813.2 694.7 C808.4 701.8 797.4 711.4 794.3 714.8 M888.9 629.1 C889.7 633.7 893.9 648.0 893.9 656.8 C893.9 665.6 887.2 673.6 888.9 682.0 C890.6 690.4 902.3 699.1 904.0 707.3 C905.7 715.5 899.8 727.2 899.0 731.2 M1059.3 586.2 C1063.9 585.6 1078.2 586.2 1087.0 582.4 C1095.8 578.6 1108.1 572.1 1112.3 563.5 C1116.5 554.9 1110.2 541.6 1112.3 530.7 C1114.4 519.8 1117.3 503.8 1124.9 497.9 C1132.5 492.0 1152.2 495.8 1157.7 495.4 M1112.3 530.7 C1116.5 529.0 1127.8 523.6 1137.5 520.6 C1147.2 517.6 1161.9 513.0 1170.3 513.0 C1178.7 513.0 1185.0 519.3 1188.0 520.6 M1208.1 550.9 C1212.3 550.0 1225.8 547.1 1233.4 545.8 C1241.0 544.5 1246.1 541.2 1253.5 543.3 C1260.9 545.4 1273.9 555.9 1278.0 558.4 M1208.1 550.9 C1206.0 555.9 1201.0 571.9 1195.5 581.1 C1190.0 590.4 1180.8 598.0 1175.3 606.4 C1169.8 614.8 1169.0 624.9 1162.7 631.6 C1156.4 638.3 1144.2 641.7 1137.5 646.7 C1130.8 651.8 1124.1 656.0 1122.4 661.9 C1120.7 667.8 1123.3 676.3 1127.4 682.0 C1131.5 687.7 1143.6 693.6 1146.8 695.9 M1049.2 646.7 C1050.5 649.2 1052.2 657.7 1056.8 661.9 C1061.4 666.1 1069.4 670.8 1077.0 672.0 C1084.6 673.2 1096.3 667.7 1102.2 669.4 C1108.1 671.1 1107.8 677.0 1112.3 682.0 C1116.8 687.0 1126.6 696.8 1129.4 699.7 M1046.7 596.3 C1042.5 596.7 1030.8 597.1 1021.5 598.8 C1012.2 600.5 1001.3 606.8 991.2 606.4 C981.1 606.0 967.6 602.6 960.9 596.3 C954.2 590.0 952.5 573.1 950.8 568.5 M991.2 606.4 C989.1 608.1 983.7 615.7 978.6 616.5 C973.5 617.3 964.3 616.4 960.9 611.4 C957.5 606.4 958.8 590.4 958.4 586.2 M948.3 646.7 C948.7 651.8 947.8 668.6 950.8 677.0 C953.8 685.4 959.3 692.2 966.0 697.2 C972.7 702.2 987.0 705.6 991.2 707.3 M892.8 631.6 C895.8 634.1 901.2 644.2 910.5 646.7 C919.8 649.2 942.0 646.7 948.3 646.7 M1278.0 558.4 C1280.7 560.5 1287.9 567.2 1293.9 571.0 C1299.9 574.8 1308.2 577.7 1314.1 581.1 C1320.0 584.5 1325.0 587.0 1329.2 591.2 C1333.4 595.4 1336.9 600.1 1339.3 606.4 C1341.7 612.7 1342.9 625.3 1343.6 629.1 M1283.8 505.5 C1284.7 509.7 1285.5 525.2 1288.9 530.7 C1292.3 536.2 1297.3 537.8 1304.0 538.2 C1310.7 538.6 1319.9 536.6 1329.2 533.2 C1338.5 529.9 1354.9 520.6 1360.0 518.1 M1294.4 623.3 C1293.5 628.9 1290.7 647.0 1288.9 656.8 C1287.1 666.6 1283.7 673.7 1283.8 682.0 C1283.9 690.3 1288.6 702.4 1289.6 706.5 M1329.2 591.2 C1328.4 596.2 1326.7 612.2 1324.2 621.5 C1321.7 630.8 1317.5 637.5 1314.1 646.7 C1310.7 656.0 1301.6 667.5 1304.0 677.0 C1306.4 686.5 1324.6 699.1 1328.7 703.5 M1053.0 703.0 C1055.3 701.2 1062.1 691.4 1066.9 692.1 C1071.7 692.8 1076.1 704.3 1082.0 707.3 C1087.9 710.2 1094.3 711.1 1102.2 709.8 C1110.1 708.5 1124.9 701.4 1129.4 699.7 M1190.0 724.4 C1193.9 723.2 1205.1 718.1 1213.2 717.4 C1221.3 716.6 1231.7 717.8 1238.4 719.9 C1245.1 722.0 1251.0 728.3 1253.5 730.0 M910.5 568.5 C910.9 573.1 913.9 588.3 913.0 596.3 C912.1 604.3 910.0 610.6 905.4 616.5 C900.8 622.4 888.6 629.1 885.2 631.6 M1264.0 400.5 C1267.9 405.0 1276.3 419.7 1287.6 427.6 C1298.9 435.5 1319.2 440.5 1331.6 447.8 C1344.0 455.1 1356.9 467.6 1362.0 471.5 M1389.0 490.4 C1393.5 491.2 1408.7 488.7 1416.0 495.1 C1423.3 501.5 1431.8 519.9 1432.9 528.9 C1434.0 537.9 1428.4 544.1 1422.8 549.2 C1417.2 554.3 1407.7 555.2 1399.1 559.3 C1390.5 563.4 1376.0 571.5 1371.4 573.9 M1432.9 528.9 C1436.3 531.1 1445.3 541.3 1453.2 542.4 C1461.1 543.5 1472.3 535.7 1480.2 535.7 C1488.1 535.7 1497.1 541.3 1500.5 542.4 M1426.2 393.8 C1430.7 395.5 1444.2 401.6 1453.2 403.9 C1462.2 406.1 1468.9 406.2 1480.2 407.3 C1491.5 408.4 1506.8 411.8 1520.8 410.7 C1534.8 409.6 1556.8 402.2 1564.0 400.5 M1453.2 403.9 C1452.1 410.7 1450.4 432.7 1446.4 444.5 C1442.5 456.3 1431.8 460.8 1429.5 474.9 C1427.2 489.0 1432.3 519.9 1432.9 528.9 M1437.0 587.0 C1437.5 593.1 1438.1 615.2 1439.7 623.5 C1441.3 631.8 1447.5 632.5 1446.4 637.0 C1445.3 641.5 1439.7 648.8 1432.9 650.5 C1426.2 652.2 1416.0 646.1 1405.9 647.2 C1395.8 648.3 1377.7 655.6 1372.1 657.3 M1343.4 629.3 C1347.1 630.0 1360.6 628.9 1365.4 633.6 C1370.2 638.3 1370.4 647.7 1372.1 657.3 C1373.8 666.9 1372.8 687.3 1375.5 691.1 C1378.2 694.9 1385.9 681.8 1388.0 679.9 M1446.4 637.0 C1452.0 635.3 1470.1 628.0 1480.2 626.9 C1490.3 625.8 1498.9 628.9 1507.2 630.3 C1515.5 631.7 1526.1 634.5 1529.9 635.3 M1500.5 542.4 C1498.2 546.9 1488.1 560.5 1487.0 569.5 C1485.9 578.5 1489.2 589.8 1493.7 596.5 C1498.2 603.2 1508.0 603.5 1514.0 610.0 C1520.0 616.5 1527.2 631.1 1529.9 635.3 M1264.0 528.9 C1269.1 528.9 1283.7 530.6 1294.4 528.9 C1305.1 527.2 1317.8 520.3 1328.2 518.8 C1338.6 517.3 1352.1 519.6 1356.9 519.8 M1277.5 557.6 C1282.0 559.6 1295.5 564.1 1304.5 569.5 C1313.5 574.9 1327.1 586.3 1331.6 589.7 M1294.4 623.5 C1295.0 630.3 1299.5 651.7 1297.8 664.1 C1296.1 676.5 1285.7 690.8 1284.3 697.8 C1282.9 704.8 1288.5 704.9 1289.3 706.3 M1388.0 679.9 C1391.0 682.9 1401.3 689.6 1405.9 697.8 C1410.5 706.0 1413.8 723.7 1415.4 728.9 M1529.9 635.3 C1532.3 632.2 1538.7 621.0 1544.4 616.8 C1550.1 612.6 1560.7 611.1 1564.0 610.0 M1480.2 407.3 C1483.6 413.5 1496.0 433.8 1500.5 444.5 C1505.0 455.2 1501.6 463.1 1507.2 471.5 C1512.8 479.9 1524.8 492.3 1534.3 495.1 C1543.8 497.9 1559.0 489.5 1564.0 488.4 M1534.3 495.1 C1535.4 500.7 1537.6 517.6 1541.0 528.9 C1544.4 540.2 1550.7 557.1 1554.5 562.7 C1558.3 568.3 1562.4 562.7 1564.0 562.7 M1492.0 722.2 C1490.0 717.0 1486.7 700.8 1480.2 691.1 C1473.7 681.4 1461.1 670.9 1453.2 664.1 C1445.3 657.3 1436.3 652.8 1432.9 650.5 M1036.6 182.5 C1036.2 189.2 1032.4 209.0 1034.1 222.9 C1035.8 236.8 1042.1 257.0 1046.7 265.8 C1051.3 274.6 1059.3 274.2 1061.8 275.9 M1034.1 222.9 C1038.7 218.3 1053.8 198.1 1061.8 195.1 C1069.8 192.1 1077.8 200.1 1082.0 205.2 C1086.2 210.2 1084.5 218.7 1087.0 225.4 C1089.5 232.1 1092.9 239.3 1097.1 245.6 C1101.3 251.9 1109.3 256.5 1112.3 263.2 C1115.2 269.9 1114.4 282.2 1114.8 286.0 M1016.9 332.6 C1020.2 332.8 1029.9 331.6 1036.6 333.9 C1043.2 336.2 1050.5 341.9 1056.8 346.5 C1063.1 351.1 1069.4 356.6 1074.4 361.6 C1079.4 366.7 1081.5 373.4 1087.0 376.8 C1092.5 380.2 1103.8 381.0 1107.2 381.8 M1107.2 381.8 C1107.2 384.8 1105.1 395.3 1107.2 399.5 C1109.3 403.7 1117.3 401.5 1119.8 407.0 C1122.3 412.5 1119.5 426.4 1122.4 432.3 C1125.4 438.2 1131.2 441.1 1137.5 442.4 C1143.8 443.6 1153.9 444.9 1160.2 439.8 C1166.5 434.8 1167.3 423.5 1175.3 412.1 C1183.3 400.8 1200.1 384.3 1208.1 371.7 C1216.1 359.1 1221.2 345.6 1223.3 336.4 C1225.4 327.1 1226.6 322.5 1220.7 316.2 C1214.8 309.9 1199.3 302.4 1188.0 298.6 C1176.7 294.8 1160.2 296.4 1152.6 293.5 C1145.0 290.6 1144.2 283.0 1142.5 280.9 M1223.3 336.4 C1227.5 339.3 1240.1 351.6 1248.5 354.1 C1256.9 356.6 1265.3 353.2 1273.7 351.5 C1282.1 349.8 1289.8 348.2 1299.0 344.0 C1308.2 339.8 1319.0 330.1 1329.2 326.3 C1339.4 322.5 1354.9 322.1 1360.0 321.3 M1299.0 344.0 C1297.3 350.3 1289.8 372.1 1288.9 381.8 C1288.1 391.5 1298.1 397.8 1293.9 402.0 C1289.7 406.2 1272.0 407.8 1263.6 407.0 C1255.2 406.2 1252.8 402.9 1243.5 397.0 C1234.2 391.1 1214.0 375.9 1208.1 371.7 M1223.3 233.0 C1224.1 238.0 1223.3 254.4 1228.3 263.2 C1233.3 272.0 1247.6 279.7 1253.5 286.0 C1259.4 292.3 1256.0 291.4 1263.6 301.1 C1271.2 310.8 1293.1 336.9 1299.0 344.0 M1263.6 301.1 C1267.8 298.6 1280.5 287.7 1288.9 286.0 C1297.3 284.3 1305.7 291.9 1314.1 291.0 C1322.5 290.1 1331.6 281.7 1339.3 280.9 C1347.0 280.1 1356.5 285.1 1360.0 286.0 M1293.9 402.0 C1297.3 398.6 1306.5 386.9 1314.1 381.8 C1321.7 376.8 1331.6 374.6 1339.3 371.7 C1347.0 368.8 1356.5 365.4 1360.0 364.2 M1263.6 180.0 C1263.6 184.2 1265.3 196.8 1263.6 205.2 C1261.9 213.6 1260.2 225.9 1253.5 230.5 C1246.8 235.1 1228.3 232.6 1223.3 233.0 M957.4 294.8 C953.8 297.5 941.0 305.1 935.7 311.2 C930.4 317.3 929.8 326.3 925.6 331.4 C921.4 336.4 917.2 339.4 910.5 341.5 C903.8 343.6 893.6 344.0 885.2 344.0 C876.8 344.0 864.2 341.9 860.0 341.5 M943.2 376.0 C939.9 375.3 930.7 371.6 923.1 371.7 C915.5 371.8 904.1 373.4 897.8 376.8 C891.5 380.2 891.5 389.0 885.2 391.9 C878.9 394.8 864.2 394.0 860.0 394.4 M986.9 404.5 C991.0 404.9 1005.6 402.4 1011.4 407.0 C1017.2 411.6 1020.2 423.5 1021.5 432.3 C1022.8 441.1 1019.3 455.4 1018.9 460.0 M892.8 280.9 C893.6 285.1 894.8 296.0 897.8 306.1 C900.8 316.2 908.4 335.6 910.5 341.5 M910.5 341.5 C911.8 345.7 920.1 360.8 918.0 366.7 C915.9 372.6 901.2 375.1 897.8 376.8 M977.8 235.5 C975.0 236.8 964.5 238.5 960.9 243.1 C957.2 247.7 956.5 254.6 955.9 263.2 C955.3 271.8 957.1 289.5 957.4 294.8 M885.2 391.9 C886.1 395.3 886.1 405.4 890.3 412.1 C894.5 418.8 906.7 424.3 910.5 432.3 C914.3 440.3 912.6 455.4 913.0 460.0 M941.5 177.9 C944.5 176.0 952.4 170.1 959.5 166.7 C966.6 163.3 977.2 159.2 984.3 157.7 C991.4 156.2 999.3 157.7 1002.3 157.7 M961.8 96.8 C965.9 96.8 978.3 96.4 986.6 96.8 C994.9 97.2 1002.8 99.5 1011.4 99.1 C1020.0 98.7 1029.4 94.2 1038.4 94.6 C1047.4 95.0 1060.9 100.3 1065.4 101.4 M1038.4 94.6 C1037.3 98.7 1030.5 112.5 1031.6 119.4 C1032.6 126.4 1042.1 129.9 1044.7 136.3 C1047.3 142.7 1048.5 150.4 1047.4 157.7 C1046.4 165.0 1039.2 172.7 1038.4 180.2 C1037.7 187.7 1038.4 196.7 1042.9 202.7 C1047.4 208.7 1059.0 210.6 1065.4 216.2 C1071.8 221.8 1078.6 233.1 1081.2 236.5 M1017.0 149.3 C1019.1 151.8 1025.8 159.2 1029.4 164.4 C1033.0 169.6 1036.9 177.6 1038.4 180.2 M961.8 96.8 C960.7 100.9 957.2 113.7 955.0 121.6 C952.8 129.5 950.5 134.7 948.3 144.1 C946.0 153.5 945.2 170.0 941.5 177.9 C937.8 185.8 931.0 187.3 925.8 191.4 C920.5 195.5 912.6 200.8 910.0 202.7 M1065.4 24.8 C1065.4 30.1 1065.0 45.4 1065.4 56.3 C1065.8 67.2 1067.3 84.5 1067.7 90.1 M986.6 54.1 C990.0 52.2 999.7 46.6 1006.8 42.8 C1013.9 39.0 1023.3 34.6 1029.4 31.5 C1035.5 28.4 1041.2 25.3 1043.6 24.1 M782.7 20.3 C784.8 20.7 789.3 21.4 795.1 22.5 C800.9 23.6 811.7 27.8 817.7 27.0 C823.7 26.2 827.5 22.5 831.2 18.0 C835.0 13.5 838.7 3.0 840.2 0.0 M795.1 22.5 C792.9 25.5 784.6 33.4 781.6 40.5 C778.6 47.6 777.9 61.2 777.1 65.3 M1080.0 66.7 C1078.9 72.2 1075.5 88.9 1073.3 100.0 C1071.1 111.1 1065.6 123.3 1066.7 133.3 C1067.8 143.3 1079.5 151.1 1080.0 160.0 C1080.5 168.9 1068.9 177.8 1070.0 186.7 C1071.1 195.6 1080.6 205.5 1086.7 213.3 C1092.8 221.1 1102.3 224.4 1106.7 233.3 C1111.1 242.2 1114.4 255.6 1113.3 266.7 C1112.2 277.8 1103.3 288.9 1100.0 300.0 C1096.7 311.1 1092.8 322.2 1093.3 333.3 C1093.8 344.4 1101.6 361.1 1103.3 366.7 M1140.0 106.7 C1137.8 102.2 1125.6 92.2 1126.7 80.0 C1127.8 67.8 1143.5 45.2 1146.7 33.3 C1149.9 21.3 1146.1 12.5 1146.0 8.3 M1193.3 140.0 C1194.4 135.6 1194.4 118.3 1200.0 113.3 C1205.6 108.3 1221.2 106.7 1226.7 110.0 C1232.2 113.3 1232.2 129.4 1233.3 133.3 M1223.3 150.0 C1225.0 153.9 1226.1 167.2 1233.3 173.3 C1240.5 179.4 1261.1 180.0 1266.7 186.7 C1272.3 193.4 1266.7 208.9 1266.7 213.3 M1220.0 233.3 C1222.2 238.9 1226.6 257.8 1233.3 266.7 C1240.0 275.6 1253.3 280.0 1260.0 286.7 C1266.7 293.4 1266.6 298.9 1273.3 306.7 C1280.0 314.5 1290.0 330.0 1300.0 333.3 C1310.0 336.6 1324.4 332.2 1333.3 326.7 C1342.2 321.1 1350.5 312.2 1353.3 300.0 C1356.1 287.8 1349.3 267.8 1350.0 253.3 C1350.7 238.9 1356.4 220.0 1357.7 213.3 M1143.3 280.0 C1146.1 282.2 1151.7 290.0 1160.0 293.3 C1168.3 296.6 1183.3 296.7 1193.3 300.0 C1203.3 303.3 1215.0 306.6 1220.0 313.3 C1225.0 320.0 1216.6 333.3 1223.3 340.0 C1230.0 346.7 1247.2 354.4 1260.0 353.3 C1272.8 352.2 1293.3 336.6 1300.0 333.3 M1353.3 300.0 C1357.8 300.0 1368.9 302.2 1380.0 300.0 C1391.1 297.8 1408.9 285.6 1420.0 286.7 C1431.1 287.8 1437.2 304.5 1446.7 306.7 C1456.2 308.9 1465.2 300.0 1476.7 300.0 C1488.2 300.0 1509.5 305.6 1516.0 306.7 M1340.7 143.3 C1340.6 137.2 1336.8 117.8 1340.0 106.7 C1343.2 95.6 1354.5 87.8 1360.0 76.7 C1365.5 65.6 1367.8 48.3 1373.3 40.0 C1378.8 31.7 1384.8 29.6 1393.3 26.7 C1401.8 23.8 1419.1 23.4 1424.3 22.7 M1340.7 143.3 C1336.1 141.1 1323.4 132.8 1313.3 130.0 C1303.2 127.2 1291.1 126.2 1280.0 126.7 C1268.9 127.2 1252.2 132.2 1246.7 133.3 M1393.3 193.3 C1392.2 198.9 1384.5 215.6 1386.7 226.7 C1388.9 237.8 1400.0 252.2 1406.7 260.0 C1413.4 267.8 1421.2 266.6 1426.7 273.3 C1432.2 280.0 1437.8 295.6 1440.0 300.0 M1424.3 22.7 C1426.9 22.2 1431.8 13.8 1440.0 20.0 C1448.2 26.2 1467.2 51.7 1473.3 60.0 C1479.4 68.3 1476.1 68.3 1476.7 70.0 M1476.7 6.7 C1477.2 11.1 1480.6 24.4 1480.0 33.3 C1479.4 42.2 1474.4 55.5 1473.3 60.0 M1436.7 213.3 C1442.2 208.9 1459.5 200.0 1470.0 186.7 C1480.5 173.4 1493.9 141.1 1500.0 133.3 C1506.1 125.5 1500.6 133.3 1506.7 140.0 C1512.8 146.7 1531.7 167.8 1536.7 173.3 M1500.0 133.3 C1495.5 134.4 1481.1 137.2 1473.3 140.0 C1465.5 142.8 1461.1 146.7 1453.3 150.0 C1445.5 153.3 1431.1 152.8 1426.7 160.0 C1422.3 167.2 1426.7 187.8 1426.7 193.3 M1511.0 256.0 C1513.6 255.6 1520.2 257.1 1526.7 253.3 C1533.2 249.5 1543.9 237.2 1550.0 233.3 C1556.1 229.4 1561.1 230.6 1563.3 230.0 M1511.0 256.0 C1508.0 256.7 1501.8 259.9 1493.3 260.0 C1484.8 260.1 1468.9 250.0 1460.0 256.7 C1451.1 263.4 1443.3 292.8 1440.0 300.0 M1516.0 306.7 C1520.0 304.5 1532.1 294.4 1540.0 293.3 C1547.9 292.2 1559.4 298.9 1563.3 300.0 M1446.7 306.7 C1447.8 311.1 1453.9 323.3 1453.3 333.3 C1452.7 343.3 1445.0 361.1 1443.3 366.7 M1551.7 95.0 C1549.8 93.0 1542.0 92.5 1540.0 83.3 C1538.0 74.1 1537.8 53.9 1540.0 40.0 C1542.2 26.1 1551.1 6.7 1553.3 0.0 M761.4 367.5 C765.1 366.5 775.0 361.8 783.8 361.3 C792.6 360.8 805.2 362.9 814.4 364.4 C823.6 365.9 832.3 371.0 838.9 370.5 C845.5 370.0 848.1 362.3 854.2 361.3 C860.3 360.3 870.1 360.8 875.7 364.4 C881.3 368.0 882.8 378.2 887.9 382.8 C893.0 387.4 903.2 390.5 906.3 392.0 M771.5 370.5 C772.5 374.6 770.5 390.4 777.6 395.0 C784.8 399.6 804.2 401.2 814.4 398.1 C824.6 395.0 834.8 381.2 838.9 376.6 C843.0 372.0 838.9 371.5 838.9 370.5 M766.9 422.0 C767.7 425.7 768.7 438.3 771.5 444.0 C774.3 449.7 779.7 450.2 783.8 456.3 C787.9 462.4 794.0 476.7 796.0 480.8 M875.7 364.4 C878.8 359.3 888.9 343.0 894.0 333.8 C899.1 324.6 902.2 317.5 906.3 309.3 C910.4 301.1 913.4 290.9 918.5 284.8 C923.6 278.7 933.8 274.6 936.9 272.5 M854.2 361.3 C853.7 366.9 852.6 384.3 851.1 395.0 C849.6 405.7 843.0 417.5 845.0 425.7 C847.0 433.9 860.3 440.9 863.4 444.0 M872.6 268.8 C873.1 272.5 872.1 284.1 875.7 290.9 C879.3 297.6 888.9 306.2 894.0 309.3 C899.1 312.4 904.2 309.3 906.3 309.3 M894.0 333.8 C898.1 335.8 910.2 339.0 918.5 346.0 C926.8 353.0 939.4 371.0 943.6 376.0 M906.3 392.0 C905.3 397.6 903.3 417.0 900.2 425.7 C897.1 434.4 886.9 437.9 887.9 444.0 C888.9 450.1 902.7 454.7 906.3 462.4 C909.9 470.1 908.8 485.4 909.3 490.0 M906.3 392.0 C909.4 392.5 918.5 397.7 924.7 395.0 C930.9 392.3 940.5 379.2 943.6 376.0 M627.6 416.5 C633.2 413.9 650.6 406.7 661.3 401.1 C672.0 395.5 683.7 388.4 691.9 382.8 C700.1 377.2 703.1 370.1 710.3 367.5 C717.4 364.9 730.7 367.5 734.8 367.5" fill="none" stroke="#f3cc9d" stroke-width="1.35" stroke-linecap="round" stroke-linejoin="round" />
<path d="M526.7 455.0 C529.8 454.3 537.0 453.3 545.0 451.0 C553.0 448.7 565.8 444.7 575.0 441.0 C584.2 437.3 595.8 431.0 600.0 429.0 M82.7 722.4 C88.6 716.9 105.8 703.5 118.0 689.6 C130.2 675.7 143.7 651.4 155.9 639.2 C168.1 627.0 181.5 621.8 191.2 616.5 C200.9 611.2 204.2 608.7 213.9 607.6 C223.6 606.5 237.0 611.4 249.2 610.1 C261.4 608.9 276.5 602.4 287.0 600.1 C297.5 597.8 303.9 599.9 312.3 596.3 C320.7 592.7 330.8 582.8 337.5 578.6 C344.2 574.4 345.9 571.4 352.6 571.0 C359.3 570.6 369.9 572.7 377.9 576.1 C385.9 579.5 393.5 589.5 400.6 591.2 C407.7 592.9 414.4 590.4 420.7 586.2 C427.0 582.0 431.2 575.2 438.4 566.0 C445.5 556.8 455.2 542.5 463.6 530.7 C472.0 518.9 480.5 506.3 488.9 495.4 C497.3 484.5 507.8 471.8 514.1 465.1 C520.4 458.4 524.6 456.7 526.7 455.0 M287.0 600.1 C286.2 607.5 283.1 630.6 282.0 644.2 C280.9 657.9 280.5 667.5 280.7 682.0 C280.9 696.5 282.9 723.0 283.3 731.2 M251.7 579.9 C249.2 576.8 240.0 569.2 236.6 561.0 C233.2 552.8 230.7 542.1 231.5 530.7 C232.3 519.3 239.9 499.1 241.6 492.8 M760.7 455.0 C758.5 465.1 744.7 504.4 747.6 515.5 C750.5 526.6 770.8 518.1 777.9 521.9 C785.0 525.7 789.2 532.5 790.5 538.2 C791.8 543.9 788.4 550.0 785.4 555.9 C782.4 561.8 777.4 567.3 772.8 573.6 C768.2 579.9 764.4 587.4 757.7 593.7 C751.0 600.0 738.0 605.1 732.5 611.4 C727.0 617.7 723.2 625.7 724.9 631.6 C726.6 637.5 737.0 640.0 742.5 646.7 C748.0 653.4 752.7 664.4 757.7 672.0 C762.8 679.6 766.1 685.8 772.8 692.1 C779.5 698.4 789.6 704.3 798.0 709.8 C806.4 715.3 816.6 721.3 823.3 724.9 C830.0 728.5 835.9 730.2 838.4 731.2 M722.4 629.1 C719.9 633.7 711.8 648.8 707.2 656.8 C702.6 664.8 699.6 671.5 694.6 677.0 C689.6 682.5 682.5 683.7 677.0 689.6 C671.5 695.5 665.6 705.4 661.8 712.3 C658.0 719.2 655.5 728.1 654.2 731.2 M955.9 455.0 C959.2 457.5 969.3 461.7 976.0 470.1 C982.7 478.5 990.3 495.8 996.2 505.5 C1002.1 515.2 1006.4 519.8 1011.4 528.2 C1016.4 536.6 1020.2 547.1 1026.5 555.9 C1032.8 564.7 1043.7 574.4 1049.2 581.1 C1054.7 587.8 1058.9 588.7 1059.3 596.3 C1059.7 603.9 1055.5 615.6 1051.7 626.5 C1047.9 637.4 1038.7 650.5 1036.6 661.9 C1034.5 673.3 1038.3 685.0 1039.1 694.7 C1039.9 704.4 1039.5 713.8 1041.6 719.9 C1043.7 726.0 1050.0 729.3 1051.7 731.2 M1051.7 731.2 C1057.6 730.6 1072.7 728.3 1087.0 727.5 C1101.3 726.7 1120.7 727.9 1137.5 726.2 C1154.3 724.5 1175.4 720.1 1188.0 717.4 C1200.6 714.7 1202.3 710.2 1213.2 709.8 C1224.1 709.4 1240.9 719.4 1253.5 714.8 C1266.1 710.2 1278.8 688.7 1288.9 682.0 C1299.0 675.3 1304.8 677.0 1314.1 674.5 C1323.3 672.0 1339.4 668.2 1344.4 666.9 M960.9 731.2 C966.0 729.7 981.1 723.5 991.2 722.4 C1001.3 721.3 1013.1 725.3 1021.5 724.9 C1029.9 724.5 1038.2 720.7 1041.6 719.9 M1480.2 360.0 C1475.7 362.2 1462.2 367.3 1453.2 373.5 C1444.2 379.7 1436.3 386.5 1426.2 397.2 C1416.1 407.9 1403.1 425.3 1392.4 437.7 C1381.7 450.1 1368.2 460.8 1362.0 471.5 C1355.8 482.2 1358.6 488.9 1355.2 501.9 C1351.8 514.9 1345.6 534.6 1341.7 549.2 C1337.8 563.8 1335.5 576.2 1331.6 589.7 C1327.7 603.2 1324.3 619.0 1318.1 630.3 C1311.9 641.6 1300.6 646.6 1294.4 657.3 C1288.2 668.0 1286.0 685.5 1280.9 694.5 C1275.8 703.5 1266.8 708.6 1264.0 711.4 M1344.3 667.0 C1348.6 668.3 1363.2 670.8 1370.0 675.0 C1376.8 679.2 1380.8 687.1 1385.0 692.5 C1389.2 697.9 1389.2 703.3 1395.0 707.5 C1400.8 711.7 1411.7 715.2 1420.0 717.5 C1428.3 719.8 1436.7 720.9 1445.0 721.3 C1453.3 721.7 1463.8 719.4 1470.0 720.0 C1476.2 720.6 1479.6 723.2 1482.5 725.0 C1485.4 726.8 1486.7 730.0 1487.5 731.0 M1487.5 731.0 C1490.8 729.3 1502.1 725.8 1507.5 721.0 C1512.9 716.2 1515.8 707.2 1520.0 702.5 C1524.2 697.8 1527.3 697.1 1532.5 692.5 C1537.7 687.9 1546.8 680.6 1551.0 675.0 C1555.2 669.4 1555.0 664.8 1557.5 659.0 C1560.0 653.2 1564.6 643.2 1566.0 640.0 M860.0 286.0 C863.0 284.7 872.2 283.4 877.7 278.4 C883.2 273.3 886.5 262.0 892.8 255.7 C899.1 249.4 908.4 243.2 915.5 240.5 C922.6 237.8 930.7 240.6 935.7 239.3 C940.8 238.1 941.6 234.9 945.8 233.0 C950.0 231.1 955.4 232.5 960.9 227.9 C966.4 223.3 973.5 213.2 978.6 205.2 C983.7 197.2 989.1 184.2 991.2 180.0 M955.9 233.0 C955.5 238.0 953.3 251.0 953.3 263.2 C953.3 275.4 951.7 296.9 955.9 306.1 C960.1 315.4 969.8 315.8 978.6 318.7 C987.4 321.6 1001.6 320.9 1008.8 323.8 C1015.9 326.8 1020.2 330.9 1021.5 336.4 C1022.8 341.9 1019.8 349.0 1016.4 356.6 C1013.0 364.2 1007.2 373.4 1001.3 381.8 C995.4 390.2 987.0 398.6 981.1 407.0 C975.2 415.4 969.4 423.5 966.0 432.3 C962.6 441.1 961.8 455.4 960.9 460.0 M1043.6 24.1 C1042.0 27.6 1038.5 37.0 1033.9 45.0 C1029.3 53.0 1020.0 62.7 1015.9 72.1 C1011.8 81.5 1009.9 92.4 1009.1 101.4 C1008.4 110.4 1012.5 116.7 1011.4 126.1 C1010.3 135.5 1007.2 147.6 1002.3 157.7 C997.4 167.8 987.0 177.2 982.1 186.9 C977.2 196.7 978.0 209.1 973.1 216.2 C968.2 223.3 959.9 226.7 952.8 229.7 C945.7 232.7 934.0 233.4 930.3 234.2 M1033.9 45.0 C1038.4 44.6 1051.9 37.9 1060.9 42.8 C1069.9 47.7 1079.7 66.4 1087.9 74.3 C1096.1 82.2 1106.3 87.5 1110.0 90.1 M1060.0 46.7 C1063.3 50.0 1073.3 59.5 1080.0 66.7 C1086.7 73.9 1092.2 83.9 1100.0 90.0 C1107.8 96.1 1116.7 97.8 1126.7 103.3 C1136.7 108.8 1148.9 117.2 1160.0 123.3 C1171.1 129.4 1182.2 132.8 1193.3 140.0 C1204.4 147.2 1215.6 160.6 1226.7 166.7 C1237.8 172.8 1248.9 174.5 1260.0 176.7 C1271.1 178.9 1283.3 177.2 1293.3 180.0 C1303.3 182.8 1311.7 190.5 1320.0 193.3 C1328.3 196.1 1333.8 196.1 1343.3 196.7 C1352.8 197.3 1368.4 197.3 1376.7 196.7 C1385.0 196.1 1385.0 193.3 1393.3 193.3 C1401.6 193.3 1418.4 193.9 1426.7 196.7 C1435.0 199.5 1435.0 208.3 1443.3 210.0 C1451.6 211.7 1466.7 203.4 1476.7 206.7 C1486.7 210.0 1495.0 225.6 1503.3 230.0 C1511.6 234.4 1516.7 232.2 1526.7 233.3 C1536.7 234.4 1557.2 236.1 1563.3 236.7 M1563.3 66.7 C1558.3 72.2 1538.8 88.9 1533.3 100.0 C1527.8 111.1 1531.7 121.1 1530.0 133.3 C1528.3 145.5 1527.2 159.4 1523.3 173.3 C1519.4 187.2 1511.7 201.1 1506.7 216.7 C1501.7 232.3 1493.9 252.8 1493.3 266.7 C1492.7 280.6 1504.4 288.3 1503.3 300.0 C1502.2 311.7 1493.4 325.6 1486.7 336.7 C1480.0 347.8 1467.2 361.7 1463.3 366.7 M600.0 428.7 C605.1 426.7 620.4 421.6 630.6 416.5 C640.8 411.4 649.5 405.8 661.3 398.1 C673.0 390.4 690.9 376.1 701.1 370.5 C711.3 364.9 714.9 364.4 722.5 364.4 C730.1 364.4 738.8 370.5 747.0 370.5 C755.2 370.5 763.3 369.5 771.5 364.4 C779.7 359.3 786.8 350.1 796.0 339.9 C805.2 329.7 816.4 312.8 826.6 303.1 C836.8 293.4 849.1 286.8 857.3 281.7 C865.5 276.6 872.6 274.0 875.7 272.5 M771.5 370.5 C772.0 374.6 774.6 385.8 774.6 395.0 C774.6 404.2 773.5 415.7 771.5 425.7 C769.5 435.7 764.3 450.2 762.9 455.1" fill="none" stroke="#f0b0b8" stroke-width="1.8" stroke-linecap="round" stroke-linejoin="round" />
<path d="M526.7 455.0 C530.6 453.6 542.0 449.6 550.0 446.5 C558.0 443.4 566.7 440.2 575.0 436.5 C583.3 432.8 595.8 426.5 600.0 424.5 M97.8 731.2 C102.7 724.9 119.8 705.0 126.9 693.4 C134.1 681.8 133.5 669.6 140.7 661.9 C147.9 654.2 159.7 653.1 170.0 647.2 C180.3 641.3 193.9 635.0 202.5 626.5 C211.1 618.0 218.6 607.6 221.5 596.3 C224.4 584.9 217.2 571.4 219.7 558.4 C222.2 545.4 232.3 531.0 236.6 518.1 C240.9 505.2 243.9 487.2 245.4 481.0 M202.5 626.5 C206.5 620.6 218.3 599.0 226.5 591.2 C234.7 583.4 243.2 582.1 251.7 579.9 C260.2 577.7 269.5 580.4 277.5 578.1 C285.5 575.8 292.2 570.8 299.7 566.0 C307.2 561.2 316.8 553.3 322.4 549.6 C328.0 545.9 327.0 541.7 333.2 543.8 C339.4 545.9 349.0 558.5 359.7 562.2 C370.4 565.9 388.6 568.3 397.5 566.0 C406.4 563.7 405.5 552.8 413.2 548.3 C420.9 543.8 434.4 545.2 443.5 538.8 C452.6 532.4 461.5 518.2 467.9 510.0 C474.3 501.8 475.8 497.7 481.8 489.8 C487.8 481.9 496.5 468.4 504.0 462.6 C511.5 456.8 522.9 456.3 526.7 455.0 M333.2 543.8 C334.3 539.5 342.2 525.8 340.0 518.1 C337.8 510.5 323.2 501.3 319.8 497.9 M333.2 543.8 C331.4 547.9 326.2 560.7 322.4 568.5 C318.6 576.3 315.1 583.0 310.5 590.7 C305.9 598.4 299.9 608.9 295.1 614.9 C290.4 620.9 283.4 621.6 282.0 626.5 C280.6 631.4 286.2 641.2 287.0 644.2 M397.5 569.3 C393.0 572.9 374.4 584.2 370.3 591.2 C366.2 598.2 368.2 605.5 372.8 611.4 C377.4 617.3 392.9 619.8 398.0 626.5 C403.1 633.2 401.4 644.6 403.1 651.8 C404.8 658.9 410.6 662.2 408.1 669.4 C405.6 676.5 391.8 686.3 388.0 694.7 C384.2 703.1 388.3 713.8 385.4 719.9 C382.4 726.0 372.8 729.3 370.3 731.2 M244.6 478.6 C248.4 475.7 260.2 467.2 267.6 461.1 C275.0 455.0 283.4 448.5 289.2 442.2 C295.0 435.9 298.9 427.8 302.7 423.2 C306.5 418.6 310.6 416.0 312.2 414.6 M634.1 487.8 C636.2 492.9 645.5 509.7 646.7 518.1 C648.0 526.5 645.0 529.8 641.6 538.2 C638.2 546.6 629.9 557.1 626.5 568.5 C623.1 579.9 621.9 592.4 621.5 606.4 C621.1 620.4 623.2 639.9 624.0 652.5 C624.8 665.1 624.8 672.5 626.5 682.0 C628.2 691.5 632.4 701.6 634.1 709.8 C635.8 718.0 636.2 727.6 636.6 731.2 M755.2 455.0 C753.9 460.1 749.7 475.6 747.6 485.3 C745.5 495.0 740.8 504.2 742.5 513.0 C744.2 521.8 752.7 531.5 757.7 538.2 C762.8 544.9 772.0 547.9 772.8 553.4 C773.6 558.9 767.1 564.8 762.7 571.0 C758.3 577.2 751.8 584.8 746.3 590.7 C740.8 596.6 733.9 600.4 729.9 606.4 C725.9 612.4 724.2 621.0 722.4 626.5 C720.6 632.0 721.8 634.6 719.3 639.2 C716.8 643.8 712.6 648.0 707.2 654.3 C701.8 660.6 694.6 668.2 687.0 677.0 C679.4 685.8 667.7 699.7 661.8 707.3 C655.9 714.9 653.4 719.9 651.7 722.4 M832.1 455.0 C829.4 458.8 819.8 470.2 815.7 477.7 C811.6 485.1 810.8 492.1 807.4 499.7 C804.0 507.3 798.7 515.0 795.5 523.1 C792.3 531.2 791.8 542.0 788.0 548.3 C784.2 554.6 775.3 558.9 772.8 561.0 M971.0 480.2 C976.0 482.7 992.0 489.1 1001.3 495.4 C1010.5 501.7 1023.6 512.2 1026.5 518.1 C1029.4 524.0 1019.3 523.6 1018.9 530.7 C1018.5 537.9 1019.5 550.8 1024.0 561.0 C1028.5 571.2 1042.0 582.5 1046.2 591.7 C1050.4 601.0 1050.0 609.0 1049.2 616.5 C1048.4 624.0 1044.6 629.6 1041.6 636.6 C1038.6 643.6 1031.8 652.7 1031.0 658.6 C1030.2 664.5 1034.0 665.6 1036.6 672.0 C1039.2 678.4 1044.0 692.0 1046.7 697.2 C1049.4 702.4 1054.7 699.2 1053.0 703.0 C1051.3 706.8 1040.2 715.3 1036.6 719.9 C1033.0 724.5 1032.3 728.9 1031.5 730.7 M860.0 646.7 C862.5 644.2 869.6 634.5 875.1 631.6 C880.6 628.7 884.8 629.1 892.8 629.1 C900.8 629.1 911.8 631.6 923.1 631.6 C934.5 631.6 952.1 631.6 960.9 629.1 C969.7 626.6 970.1 616.9 976.0 616.5 C981.9 616.1 989.5 623.1 996.2 626.5 C1002.9 629.9 1010.6 631.2 1016.4 636.6 C1022.2 642.0 1028.6 654.9 1031.0 658.6 M1053.0 703.0 C1057.0 705.4 1067.1 714.6 1077.0 717.4 C1086.9 720.2 1103.6 722.8 1112.3 719.9 C1121.0 717.0 1123.7 703.7 1129.4 699.7 C1135.2 695.7 1139.2 692.1 1146.8 695.9 C1154.4 699.7 1168.1 717.6 1175.3 722.4 C1182.5 727.1 1182.0 722.9 1190.0 724.4 C1198.0 725.9 1217.8 730.1 1223.3 731.2 M1238.4 731.2 C1240.9 731.0 1245.0 734.1 1253.5 730.0 C1262.0 725.9 1281.2 708.2 1289.6 706.5 C1298.0 704.8 1298.7 715.8 1304.0 719.9 C1309.3 724.0 1318.8 729.3 1321.7 731.2 M1251.0 545.3 C1255.5 547.5 1271.7 553.7 1278.0 558.4 C1284.3 563.1 1287.1 567.3 1288.9 573.6 C1290.7 579.9 1288.0 588.0 1288.9 596.3 C1289.8 604.6 1290.2 617.0 1294.4 623.3 C1298.6 629.6 1305.9 632.1 1314.1 634.1 C1322.3 636.1 1338.7 635.2 1343.6 635.4 M1480.2 360.0 C1476.5 362.8 1464.5 370.7 1458.3 376.9 C1452.1 383.1 1452.8 384.9 1443.1 397.2 C1433.3 409.5 1408.8 435.0 1399.8 450.5 C1390.8 466.0 1396.2 478.8 1389.0 490.4 C1381.8 501.9 1361.4 510.0 1356.9 519.8 C1352.4 529.6 1359.6 540.2 1362.0 549.2 C1364.4 558.2 1369.2 566.0 1371.4 573.9 C1373.7 581.8 1378.8 588.8 1375.5 596.5 C1372.2 604.2 1357.1 614.6 1351.8 620.1 C1346.5 625.6 1345.7 622.0 1343.4 629.3 C1341.2 636.6 1340.8 651.7 1338.3 664.1 C1335.8 676.5 1331.6 692.6 1328.2 703.6 C1324.8 714.6 1319.8 725.5 1318.1 729.9 M1375.5 596.5 C1379.4 594.2 1391.2 585.0 1399.1 583.0 C1407.0 581.0 1416.5 584.0 1422.8 584.7 C1429.1 585.4 1434.6 586.6 1437.0 587.0 M1534.3 360.0 C1532.6 365.6 1524.1 379.7 1524.1 393.8 C1524.1 407.9 1533.2 427.6 1534.3 444.5 C1535.4 461.4 1534.3 481.0 1530.9 495.1 C1527.5 509.2 1515.1 516.5 1514.0 528.9 C1512.9 541.3 1522.1 556.0 1524.1 569.5 C1526.1 583.0 1524.8 599.0 1525.8 610.0 C1526.8 621.0 1529.2 631.1 1529.9 635.3 M1318.0 731.0 C1322.5 730.3 1335.5 727.2 1345.0 727.0 C1354.5 726.8 1366.9 729.7 1375.0 730.0 C1383.1 730.3 1388.4 730.2 1393.8 728.8 C1399.2 727.3 1401.0 723.6 1407.5 721.3 C1414.0 719.0 1424.6 716.9 1432.5 715.0 C1440.4 713.1 1448.8 711.2 1455.0 710.0 C1461.2 708.8 1464.0 706.0 1470.0 708.0 C1476.0 710.0 1485.0 720.7 1491.3 721.9 C1497.5 723.1 1500.6 717.4 1507.5 715.0 C1514.4 712.6 1525.2 707.8 1532.5 707.5 C1539.8 707.2 1545.7 712.2 1551.3 713.0 C1556.9 713.8 1563.5 712.2 1566.0 712.0 M1529.9 635.3 C1532.4 638.6 1540.4 648.8 1545.0 655.0 C1549.6 661.2 1555.7 664.6 1557.5 672.5 C1559.3 680.4 1557.0 695.8 1556.0 702.5 C1555.0 709.2 1552.1 711.2 1551.3 713.0 M1311.6 180.0 C1307.8 182.1 1293.5 188.8 1288.9 192.6 C1284.3 196.4 1288.0 198.5 1283.8 202.7 C1279.6 206.9 1270.3 213.6 1263.6 217.8 C1256.9 222.0 1250.7 227.5 1243.5 227.9 C1236.3 228.3 1225.8 219.1 1220.7 220.4 C1215.7 221.7 1216.6 231.7 1213.2 235.5 C1209.8 239.3 1203.5 239.7 1200.6 243.1 C1197.6 246.5 1201.8 253.2 1195.5 255.7 C1189.2 258.2 1171.5 255.3 1162.7 258.2 C1153.9 261.1 1147.1 269.1 1142.5 273.3 C1137.9 277.5 1140.0 280.0 1135.0 283.4 C1130.0 286.8 1120.3 291.4 1112.3 293.5 C1104.3 295.6 1093.7 297.7 1087.0 296.0 C1080.3 294.3 1077.4 285.9 1071.9 283.4 C1066.4 280.9 1057.6 282.6 1054.2 280.9 C1050.8 279.2 1054.6 271.2 1051.7 273.3 C1048.8 275.4 1040.8 287.2 1036.6 293.5 C1032.4 299.8 1029.8 304.7 1026.5 311.2 C1023.2 317.7 1018.5 329.0 1016.9 332.6 M999.5 197.7 C996.9 201.5 987.2 214.1 983.6 220.4 C980.0 226.7 979.9 228.4 977.8 235.5 C975.7 242.6 973.0 253.5 971.0 263.2 C969.0 272.9 964.3 284.7 966.0 293.5 C967.7 302.3 974.4 310.7 981.1 316.2 C987.8 321.7 1000.3 323.6 1006.3 326.3 C1012.3 329.0 1016.5 328.4 1016.9 332.6 C1017.3 336.8 1011.4 344.1 1008.8 351.5 C1006.2 358.9 1004.9 368.0 1001.3 376.8 C997.6 385.6 992.4 396.9 986.9 404.5 C981.4 412.1 972.8 415.5 968.5 422.2 C964.2 428.9 962.4 438.6 960.9 444.9 C959.4 451.2 959.8 457.5 959.6 460.0 M981.1 321.3 C977.7 321.7 965.7 320.4 960.9 323.8 C956.1 327.2 953.8 334.4 952.1 341.5 C950.4 348.6 952.3 360.9 950.8 366.7 C949.3 372.4 946.6 370.9 943.2 376.0 C939.8 381.1 936.1 390.1 930.6 397.0 C925.1 403.9 916.4 411.2 910.5 417.1 C904.6 423.0 901.6 428.5 895.3 432.3 C889.0 436.1 878.5 438.1 872.6 439.8 C866.7 441.5 862.1 442.0 860.0 442.4 M873.1 268.8 C876.4 270.8 886.6 279.3 892.8 280.9 C899.0 282.5 904.2 279.2 910.5 278.4 C916.8 277.6 924.7 278.4 930.6 275.9 C936.5 273.4 940.8 266.6 945.8 263.2 C950.8 259.8 956.7 255.7 960.9 255.7 C965.1 255.7 969.3 261.9 971.0 263.2 M873.1 268.8 C876.4 265.8 886.6 257.0 892.8 250.6 C899.0 244.2 904.6 238.1 910.5 230.5 C916.4 222.9 923.9 213.6 928.1 205.2 C932.3 196.8 934.4 184.2 935.7 180.0 M1043.6 24.1 C1045.7 24.2 1052.0 21.3 1056.4 24.8 C1060.8 28.3 1066.9 36.8 1069.9 45.0 C1072.9 53.2 1075.2 64.9 1074.4 74.3 C1073.7 83.7 1069.2 91.3 1065.4 101.4 C1061.7 111.5 1056.4 127.2 1051.9 135.1 C1047.4 143.0 1044.2 146.2 1038.4 148.6 C1032.6 151.0 1022.3 147.0 1017.0 149.3 C1011.7 151.6 1009.7 154.2 1006.8 162.2 C1003.9 170.2 1002.8 188.5 999.4 197.5 C996.0 206.5 990.2 209.9 986.6 216.2 C983.0 222.5 979.1 232.2 977.6 235.4 M1043.6 24.1 C1039.7 27.2 1026.9 37.0 1020.4 42.8 C1013.9 48.5 1008.4 53.4 1004.6 58.6 C1000.8 63.9 999.7 67.2 997.8 74.3 C995.9 81.4 995.0 92.5 993.3 101.4 C991.6 110.3 989.2 121.2 987.7 127.9 C986.2 134.7 987.5 136.9 984.3 141.9 C981.1 146.9 975.7 151.7 968.6 157.7 C961.5 163.7 948.6 170.4 941.5 177.9 C934.4 185.4 931.4 194.4 925.8 202.7 C920.2 211.0 913.0 220.4 907.7 227.5 C902.4 234.6 896.5 242.5 894.2 245.5 M970.8 121.6 C973.6 122.6 980.0 123.3 987.7 127.9 C995.4 132.5 1012.1 145.7 1017.0 149.3 M1060.0 30.0 C1065.5 28.3 1079.0 23.6 1093.3 20.0 C1107.6 16.4 1134.9 11.6 1146.0 8.3 C1157.1 5.0 1157.7 1.4 1160.0 0.0 M1071.7 33.3 C1072.0 39.4 1069.4 58.4 1073.3 70.0 C1077.2 81.6 1083.9 96.6 1095.0 102.7 C1106.1 108.8 1129.2 104.4 1140.0 106.7 C1150.8 109.0 1151.1 113.4 1160.0 116.7 C1168.9 120.0 1181.6 126.7 1193.3 126.7 C1205.0 126.7 1222.8 115.6 1230.0 116.7 C1237.2 117.8 1232.8 128.3 1236.7 133.3 C1240.6 138.3 1250.0 141.1 1253.3 146.7 C1256.6 152.3 1253.4 163.9 1256.7 166.7 C1260.0 169.5 1267.2 166.1 1273.3 163.3 C1279.4 160.5 1285.5 153.1 1293.3 150.0 C1301.1 146.9 1312.1 146.1 1320.0 145.0 C1327.9 143.9 1336.2 139.7 1340.7 143.3 C1345.2 146.9 1344.6 158.4 1346.7 166.7 C1348.8 175.0 1351.5 185.5 1353.3 193.3 C1355.1 201.1 1357.0 210.0 1357.7 213.3 M1357.7 213.3 C1355.9 215.5 1351.9 225.6 1346.7 226.7 C1341.5 227.8 1330.6 225.6 1326.7 220.0 C1322.8 214.4 1325.0 199.7 1323.3 193.3 C1321.6 186.9 1318.8 183.9 1316.7 181.7 C1314.7 179.5 1312.0 180.3 1311.0 180.0 M1357.7 213.3 C1358.1 208.9 1356.3 190.6 1360.0 186.7 C1363.7 182.8 1374.5 190.0 1380.0 190.0 C1385.5 190.0 1385.5 186.1 1393.3 186.7 C1401.1 187.2 1419.5 188.9 1426.7 193.3 C1433.9 197.7 1431.2 210.0 1436.7 213.3 C1442.2 216.6 1450.6 212.2 1460.0 213.3 C1469.4 214.4 1484.8 212.9 1493.3 220.0 C1501.8 227.1 1508.0 250.0 1511.0 256.0 M1563.3 50.0 C1561.4 57.5 1555.0 83.9 1551.7 95.0 C1548.4 106.1 1543.6 108.1 1543.3 116.7 C1543.0 125.3 1551.1 137.3 1550.0 146.7 C1548.9 156.1 1541.2 163.6 1536.7 173.3 C1532.2 183.0 1527.0 191.2 1522.7 205.0 C1518.4 218.8 1512.1 239.1 1511.0 256.0 C1509.9 272.9 1519.0 292.7 1516.0 306.7 C1513.0 320.7 1501.5 330.0 1493.3 340.0 C1485.1 350.0 1471.1 362.2 1466.7 366.7 M1406.7 0.0 C1407.8 5.0 1410.4 26.2 1413.3 30.0 C1416.2 33.8 1421.0 19.4 1424.3 22.7 C1427.6 26.0 1427.3 42.7 1433.3 50.0 C1439.2 57.3 1450.0 63.4 1460.0 66.7 C1470.0 70.0 1483.3 66.1 1493.3 70.0 C1503.3 73.9 1510.3 85.8 1520.0 90.0 C1529.7 94.2 1546.4 94.2 1551.7 95.0 M1516.0 306.7 C1518.9 305.6 1529.3 296.7 1533.3 300.0 C1537.3 303.3 1540.5 318.4 1540.0 326.7 C1539.5 335.0 1530.5 343.3 1530.0 350.0 C1529.5 356.7 1535.6 363.9 1536.7 366.7 M600.0 419.5 C604.6 419.0 617.4 420.6 627.6 416.5 C637.8 412.4 650.6 401.6 661.3 395.0 C672.0 388.4 684.2 381.7 691.9 376.6 C699.5 371.5 700.1 366.4 707.2 364.4 C714.4 362.4 725.8 363.9 734.8 364.4 C743.8 364.9 755.3 368.5 761.4 367.5 C767.5 366.5 765.7 363.9 771.5 358.3 C777.3 352.7 787.8 342.0 796.0 333.8 C804.2 325.6 812.3 317.5 820.5 309.3 C828.7 301.1 836.3 291.6 845.0 284.8 C853.7 278.1 868.0 271.5 872.6 268.8 M761.4 367.5 C762.1 372.1 764.5 385.9 765.4 395.0 C766.3 404.1 767.9 413.8 766.9 422.0 C765.9 430.2 761.2 438.5 759.3 444.0 C757.4 449.5 756.0 453.2 755.3 455.1 M832.8 453.2 C836.4 451.7 847.1 446.0 854.2 444.0 C861.4 442.0 869.1 443.0 875.7 441.0 C882.3 439.0 887.9 434.9 894.0 431.8 C900.1 428.7 904.1 431.9 912.4 422.6 C920.7 413.3 938.4 383.8 943.6 376.0 M627.6 416.5 C628.6 421.1 633.2 434.8 633.7 444.0 C634.2 453.2 630.1 463.9 630.6 471.6 C631.1 479.3 635.8 486.9 636.8 490.0" fill="none" stroke="#a3a2ab" stroke-width="1.9" stroke-linecap="round" stroke-linejoin="round" />
<path d="M722.4 629.1 C723.6 632.9 725.3 643.8 729.9 651.8 C734.5 659.8 743.4 667.8 750.1 677.0 C756.8 686.2 762.7 698.9 770.3 707.3 C777.9 715.7 789.2 723.5 795.5 727.5 C801.8 731.5 806.0 730.6 808.1 731.2 M960.9 455.0 C962.6 459.2 966.0 472.6 971.0 480.2 C976.0 487.8 984.5 494.1 991.2 500.4 C997.9 506.7 1006.8 511.8 1011.4 518.1 C1016.0 524.4 1016.8 527.7 1018.9 538.2 C1021.0 548.7 1024.0 568.1 1024.0 581.1 C1024.0 594.1 1019.3 603.9 1018.9 616.5 C1018.5 629.1 1020.2 643.8 1021.5 656.8 C1022.8 669.8 1025.2 683.4 1026.5 694.7 C1027.8 706.1 1028.6 719.9 1029.0 724.9 M870.1 731.2 C873.5 727.6 880.6 715.3 890.3 709.8 C900.0 704.3 916.3 699.7 928.1 698.4 C939.9 697.1 951.2 700.3 960.9 702.2 C970.6 704.1 977.7 708.9 986.1 709.8 C994.5 710.6 1004.2 706.0 1011.4 707.3 C1018.5 708.6 1026.1 715.7 1029.0 717.4 M1466.7 360.0 C1465.0 361.1 1463.3 358.4 1456.6 366.8 C1449.8 375.2 1435.8 396.6 1426.2 410.7 C1416.6 424.8 1408.1 436.0 1399.1 451.2 C1390.1 466.4 1378.8 485.6 1372.1 501.9 C1365.3 518.2 1362.0 533.4 1358.6 549.2 C1355.2 565.0 1354.0 581.3 1351.8 596.5 C1349.5 611.7 1347.6 623.5 1345.1 640.4 C1342.6 657.3 1339.1 682.9 1336.6 697.8 C1334.1 712.7 1331.0 724.5 1329.9 729.9 M993.7 185.0 C991.6 190.5 984.5 206.0 981.1 217.8 C977.7 229.6 974.8 243.9 973.5 255.7 C972.2 267.5 971.4 278.4 973.5 288.5 C975.6 298.6 981.1 305.7 986.1 316.2 C991.1 326.7 1001.3 342.2 1003.8 351.5 C1006.3 360.8 1005.5 362.4 1001.3 371.7 C997.1 380.9 985.3 397.8 978.6 407.0 C971.9 416.2 964.7 420.9 960.9 427.2 C957.1 433.5 956.3 439.4 955.9 444.9 C955.5 450.4 958.0 457.5 958.4 460.0 M1043.6 24.1 C1042.0 29.5 1037.0 45.3 1033.9 56.3 C1030.8 67.3 1027.2 80.7 1024.9 90.1 C1022.7 99.5 1023.4 103.2 1020.4 112.6 C1017.4 122.0 1011.3 135.1 1006.8 146.4 C1002.3 157.7 997.4 167.8 993.3 180.2 C989.2 192.6 984.7 209.4 982.1 220.7 C979.5 231.9 978.4 243.2 977.6 247.7 M1563.3 56.7 C1561.6 63.9 1555.5 87.2 1553.3 100.0 C1551.1 112.8 1552.2 118.9 1550.0 133.3 C1547.8 147.8 1543.9 170.0 1540.0 186.7 C1536.1 203.4 1531.7 216.6 1526.7 233.3 C1521.7 250.0 1516.7 270.0 1510.0 286.7 C1503.3 303.4 1495.0 320.0 1486.7 333.3 C1478.4 346.6 1464.5 361.1 1460.0 366.7" fill="none" stroke="#6f8fb9" stroke-width="1.7" stroke-linecap="round" stroke-linejoin="round" />
<path d="M1390 207 L1403 197 L1420 198 L1433 213 L1438 230 L1430 243 L1423 250 L1413 247 L1407 237 L1397 223 Z" fill="#b4e2fb"/>
<path d="M1180 545 L1188 544 L1198 548 L1206 552 L1205 556 L1196 555 L1186 552 L1180 549 Z" fill="#b4e2fb"/>
</g>
<g fill="#fff" stroke="#7d7d82" stroke-width="1.5"><circle cx="245.4" cy="481" r="3.1"/><circle cx="319.8" cy="497.9" r="3.1"/><circle cx="481.8" cy="489.8" r="3.1"/><circle cx="467.9" cy="510" r="3.1"/><circle cx="443.5" cy="538.8" r="3.1"/><circle cx="333.2" cy="543.8" r="3.1"/><circle cx="359.7" cy="562.2" r="3.1"/><circle cx="397.5" cy="569.3" r="3.1"/><circle cx="219.7" cy="558.4" r="3.1"/><circle cx="277.5" cy="578.1" r="3.1"/><circle cx="310.5" cy="590.7" r="3.1"/><circle cx="295.1" cy="615" r="3.1"/><circle cx="202.5" cy="626.5" r="3.1"/><circle cx="170" cy="647.2" r="3.1"/><circle cx="185.6" cy="644.7" r="3.1"/><circle cx="165" cy="677.5" r="3.1"/><circle cx="126.9" cy="693.4" r="3.1"/><circle cx="807.4" cy="499.7" r="3.1"/><circle cx="808" cy="548.6" r="3.1"/><circle cx="746.3" cy="590.7" r="3.1"/><circle cx="786.7" cy="588.7" r="3.1"/><circle cx="719.3" cy="639.2" r="3.1"/><circle cx="624.2" cy="652.5" r="3.1"/><circle cx="765.2" cy="696.7" r="3.1"/><circle cx="794.3" cy="714.8" r="3.1"/><circle cx="828.8" cy="729.5" r="3.1"/><circle cx="1278" cy="558.4" r="3.1"/><circle cx="1046.2" cy="591.7" r="3.1"/><circle cx="1294.4" cy="623.3" r="3.1"/><circle cx="1343.6" cy="629.1" r="3.1"/><circle cx="1031" cy="658.6" r="3.1"/><circle cx="1053" cy="703" r="3.1"/><circle cx="1129.4" cy="699.7" r="3.1"/><circle cx="1146.8" cy="695.9" r="3.1"/><circle cx="1190" cy="724.4" r="3.1"/><circle cx="1289.6" cy="706.5" r="3.1"/><circle cx="1328.7" cy="703.5" r="3.1"/><circle cx="990.7" cy="729.5" r="3.1"/><circle cx="1031.5" cy="730.7" r="3.1"/><circle cx="1458.3" cy="376.9" r="3.1"/><circle cx="1399.8" cy="450.5" r="3.1"/><circle cx="1389" cy="490.4" r="3.1"/><circle cx="1356.9" cy="519.8" r="3.1"/><circle cx="1371.4" cy="573.9" r="3.1"/><circle cx="1437" cy="587" r="3.1"/><circle cx="1529.9" cy="635.3" r="3.1"/><circle cx="1388" cy="680" r="3.1"/><circle cx="1492" cy="722.2" r="3.1"/><circle cx="1551.2" cy="713.7" r="3.1"/><circle cx="1415.4" cy="728.9" r="3.1"/><circle cx="999.5" cy="197.6" r="3.1"/><circle cx="977.7" cy="235.4" r="3.1"/><circle cx="872.9" cy="268.8" r="3.1"/><circle cx="957.4" cy="294.4" r="3.1"/><circle cx="1016.9" cy="332.6" r="3.1"/><circle cx="943.4" cy="376" r="3.1"/><circle cx="986.7" cy="404.3" r="3.1"/><circle cx="1043.6" cy="24.1" r="3.1"/><circle cx="1145.7" cy="9" r="3.1"/><circle cx="987.7" cy="127.9" r="3.1"/><circle cx="1044.7" cy="136.3" r="3.1"/><circle cx="1017" cy="149.3" r="3.1"/><circle cx="1110" cy="61.7" r="3.1"/><circle cx="1095" cy="102.8" r="3.1"/><circle cx="1424.3" cy="22.7" r="3.1"/><circle cx="1551.7" cy="95" r="3.1"/><circle cx="1340.7" cy="143.3" r="3.1"/><circle cx="1536.7" cy="173.3" r="3.1"/><circle cx="1522.7" cy="205" r="3.1"/><circle cx="1357.7" cy="213.3" r="3.1"/><circle cx="1511" cy="256" r="3.1"/><circle cx="1516" cy="306.7" r="3.1"/><circle cx="761.4" cy="367.5" r="3.1"/><circle cx="766.9" cy="422" r="3.1"/><circle cx="627.6" cy="416.5" r="3.1"/><circle cx="288.1" cy="260" r="3.1"/><circle cx="414.3" cy="239.5" r="3.1"/><circle cx="313" cy="414.6" r="3.1"/></g>
<g fill="#5c5c5c"><path d="M588.1 545.2 L591.7 538.6 L595.3000000000001 545.2 Z"/><path d="M538.4 623.9000000000001 L542 617.3000000000001 L545.6 623.9000000000001 Z"/><path d="M548.4 728.2 L552 721.6 L555.6 728.2 Z"/><path d="M1277.1000000000001 55.900000000000006 L1280.7 49.300000000000004 L1284.3 55.900000000000006 Z"/></g>
<g fill="#d4561e"><path d="M858.8 596.2 L862.4 589.6 L866.0 596.2 Z"/><path d="M857.0 697.9000000000001 L860.6 691.3000000000001 L864.2 697.9000000000001 Z"/><path d="M1199.5 542.2 L1203.1 535.6 L1206.6999999999998 542.2 Z"/><path d="M1127.6000000000001 456.9 L1131.2 450.3 L1134.8 456.9 Z"/><path d="M1404.7 169.2 L1408.3 162.6 L1411.8999999999999 169.2 Z"/></g>
<g class="ml" font-size="10.9" font-weight="300" fill="#686868" text-anchor="middle" stroke="#f3f6e4" stroke-width="1" paint-order="stroke" stroke-opacity=".35">
<text x="245.4" y="472.8">羽咋</text>
<text x="318.6" y="488.7">氷見</text>
<text x="482.6" y="481.1">黒部</text>
<text x="466.2" y="501.3">魚津</text>
<text x="443" y="528.9">滑川</text>
<text x="333.7" y="534.1">高岡</text>
<text x="357.7" y="552.9">射水</text>
<text x="397.5" y="560.3">富山</text>
<text x="218.4" y="549.7">かほく</text>
<text x="277.5" y="569.1">小矢部</text>
<text x="309.7" y="582.0">砺波</text>
<text x="295.9" y="609.5">南砺</text>
<text x="201.8" y="618.3">金沢</text>
<text x="169" y="638.5">白山</text>
<text x="206.3" y="641.0">野々市</text>
<text x="321" y="652.6">庄川峡</text>
<text x="403.6" y="659.5">神通峡</text>
<text x="165.5" y="668.3">能美</text>
<text x="126" y="684.7">小松</text>
<text x="186" y="722.5">手取峡谷</text>
<text x="82.2" y="731.4">加賀</text>
<text x="518" y="630.4">称名峡</text>
<text x="561" y="610.3">称名滝</text>
<text x="581" y="625.4">立山&lt;大汝山&gt;</text>
<text x="531.8" y="648.3">五色ヶ原</text>
<text x="483.5" y="686.7">太郎兵衛平</text>
<text x="526.8" y="699.8">雲ノ平</text>
<text x="564.7" y="710.7">高瀬渓谷</text>
<text x="641.6" y="731.4">安曇野</text>
<text x="738.8" y="466.5">天狗の庭湿原</text>
<text x="706" y="484.9">高谷池湿原</text>
<text x="724.9" y="511.9">妙高高原</text>
<text x="805.6" y="491.2">飯山</text>
<text x="943" y="465.1">清津峡</text>
<text x="912.8" y="525.8">苗場山頂の湿原</text>
<text x="812" y="539.6">中野</text>
<text x="608.8" y="556.8">白馬岳 栂池高原</text>
<text x="706" y="559.8">戸隠高原</text>
<text x="746.3" y="581.8">長野</text>
<text x="786.7" y="580.0">須坂</text>
<text x="856" y="576.2">志賀高原</text>
<text x="848.5" y="607.7">白根山</text>
<text x="886.3" y="611.5">草津高原</text>
<text x="929.6" y="639.3">吾妻峡</text>
<text x="719.8" y="629.7">千曲</text>
<text x="623.5" y="643.8">大町</text>
<text x="796.8" y="655.7">菅平高原</text>
<text x="766.5" y="688.5">上田</text>
<text x="795.5" y="706.1">東御</text>
<text x="828.3" y="721.3">小諸</text>
<text x="832" y="684.2">鹿沢高原</text>
<text x="873.7" y="687.9">浅間高原</text>
<text x="861" y="710.7">浅間山</text>
<text x="899" y="732.6">軽井沢</text>
<text x="1109.7" y="491.2">中ノ原</text>
<text x="1158.9" y="502.3">鬼怒沼湿原</text>
<text x="1081.2" y="514.9">照葉峡</text>
<text x="1215.2" y="518.9">霧降高原</text>
<text x="1285.8" y="508.9">竜王峡</text>
<text x="1268.2" y="526.5">霧降滝</text>
<text x="1180.9" y="535.8">湯滝</text>
<text x="1229.6" y="535.3">雲竜峡</text>
<text x="1207.6" y="562.3">華厳滝</text>
<text x="1278.8" y="550.2">日光</text>
<text x="1103.4" y="578.0">吹割の滝</text>
<text x="1046.2" y="582.5">沼田</text>
<text x="1294.4" y="615.8">鹿沼</text>
<text x="1343.1" y="619.1">宇都宮</text>
<text x="1030.3" y="649.4">渋川</text>
<text x="1053" y="693.5">前橋</text>
<text x="1116.8" y="691.0">みどり</text>
<text x="1146.3" y="685.9">桐生</text>
<text x="1189.2" y="716.2">足利</text>
<text x="1288.9" y="696.5">栃木</text>
<text x="1329.2" y="694.8">下野</text>
<text x="1314" y="726.5">小山</text>
<text x="1341.8" y="730.7">結城</text>
<text x="1239.7" y="728.8">佐野</text>
<text x="1099.7" y="727.6">伊勢崎</text>
<text x="989.9" y="721.3">安中</text>
<text x="1032.8" y="723.3">高崎</text>
<text x="1457.2" y="368.9">白河</text>
<text x="1375.5" y="389.2">那須高原</text>
<text x="1399.1" y="442.3">那須塩原</text>
<text x="1388.3" y="482.1">大田原</text>
<text x="1358.6" y="510.9">矢板</text>
<text x="1371.4" y="563.9">さくら</text>
<text x="1437" y="577.4">那須烏山</text>
<text x="1527.5" y="550.4">袋田の滝</text>
<text x="1534.3" y="625.7">常陸大宮</text>
<text x="1384" y="670.7">真岡</text>
<text x="1489.7" y="711.9">笠間</text>
<text x="1549.5" y="703.4">水戸</text>
<text x="1415.4" y="720.3">桜川</text>
<text x="1377.2" y="730.5">筑西</text>
<text x="1000" y="188.9">見附</text>
<text x="977.4" y="225.9">長岡</text>
<text x="874" y="258.4">柏崎</text>
<text x="957" y="285.9">小千谷</text>
<text x="1016.9" y="322.6">魚沼</text>
<text x="942.8" y="368.3">十日町</text>
<text x="985.7" y="395.6">南魚沼</text>
<text x="1119.8" y="460.1">三条ノ滝</text>
<text x="1200.6" y="456.4">田代山頂湿原</text>
<text x="1044" y="15.2">新潟</text>
<text x="1146" y="0.4">新発田</text>
<text x="988.8" y="118.8">燕</text>
<text x="1045.1" y="127.3">加茂</text>
<text x="1017" y="141.3">三条</text>
<text x="1110.7" y="53.2">阿賀野</text>
<text x="1095" y="93.4">五泉</text>
<text x="1281" y="67.2">飯豊山</text>
<text x="1424.3" y="13.2">米沢</text>
<text x="1470.7" y="87.2">弥兵衛平</text>
<text x="1552.7" y="85.6">福島</text>
<text x="1456.7" y="118.9">谷地平</text>
<text x="1340" y="133.2">喜多方</text>
<text x="1410" y="155.6">磐梯高原</text>
<text x="1361.7" y="169.6">雄国沼湿原</text>
<text x="1408.3" y="180.6">磐梯山</text>
<text x="1535" y="164.6">二本松</text>
<text x="1522.7" y="194.9">本宮</text>
<text x="1360" y="204.9">会津若松</text>
<text x="1510" y="246.2">郡山</text>
<text x="1515" y="297.2">須賀川</text>
<text x="1397.7" y="333.2">布引高原</text>
<text x="761.7" y="359.7">上越</text>
<text x="766.9" y="413.6">妙高</text>
<text x="626" y="406.6">糸魚川</text>
<text x="287.5" y="251.5">輪島</text>
<text x="414.6" y="230.7">珠洲</text>
<text x="438" y="209.9">禄剛崎</text>
<text x="213.5" y="349.9">関野鼻</text>
<text x="314" y="405.9">七尾</text>
</g>
<g class="mp" font-size="14.2" font-weight="bold" fill="#333" text-anchor="middle" stroke="#f3f6e4" stroke-width="1.6" paint-order="stroke" stroke-opacity=".5">
<text x="227.8" y="586.2">石川県</text>
<text x="280" y="655.6">富山県</text>
<text x="871.7" y="635.9">群馬県</text>
<text x="1259.8" y="587.5">栃木県</text>
<text x="993.7" y="256.2">新潟県</text>
<text x="1307.6" y="266.9">福島県</text>
</g>
<path d="M1383.2 0V732" stroke="#bdebee" stroke-width="1.1" opacity=".9"/>
<!-- overlays -->
<g fill="none" stroke-linejoin="miter">
<polygon points="708.4,5 926.9,42.8 877,320 663,284" stroke="#008000" stroke-width="2.4"/>
<polygon points="637.6,446.8 847.7,483 802,758 589.3,721" stroke="#008000" stroke-width="2.4"/>
<rect x="660.6" y="166" width="272.6" height="347.8" stroke="#ffa500" stroke-width="2.2"/>
<polygon points="671,227 888,264 841,540 625,503" stroke="#ff0000" stroke-width="5.6"/>
</g>
<circle cx="794.7" cy="163.3" r="7" fill="#008000"/>
<circle cx="719.2" cy="602.6" r="7" fill="#008000"/>
<circle cx="757" cy="383" r="7.2" fill="#ff0000"/>

</svg>
<div class="pan"><i class="u"></i><i class="d"></i><i class="l"></i><i class="r"></i></div>
<div class="zb" style="top:66px"><svg width="12" height="12" viewBox="0 0 12 12"><path d="M6 3.2v5.6M3.2 6h5.6" stroke="#72cf58" stroke-width="2.7" stroke-linecap="round"/></svg></div>
<div class="ztrack"></div>
<div class="zh"><svg width="13" height="10" viewBox="0 0 13 10"><path d="M3 4.6h7M4.6 2.6L2.6 4.6l2 2M8.4 2.6l2 2-2 2" stroke="#fff" stroke-width="1.2" fill="none"/></svg></div>
<div class="zb" style="top:206px"><svg width="12" height="12" viewBox="0 0 12 12"><path d="M2.8 6h6.4" stroke="#9bd888" stroke-width="2.2" stroke-linecap="round"/></svg></div>
<div class="cbtn">&lt;&lt;</div>
<div class="rpanel" style="left:94px;width:329px">
<span class="rd on" style="left:11px"></span><span class="rt" style="left:35.5px"><span class="k">メルカトル</span>図法</span>
<span class="rd" style="left:126px"></span><span class="rt" style="left:151px">極域投影北</span>
<span class="rd" style="left:231px"></span><span class="rt" style="left:255.5px">極域投影南</span>
</div>
<div class="rpanel" style="left:426px;width:166px">
<span class="rd on" style="left:17px"></span><span class="rt" style="left:42px">地図</span>
<span class="rd" style="left:80px"></span><span class="rt" style="left:105px">衛星画像</span>
</div>
<svg class="tools" width="460" height="40" viewBox="0 0 460 40">
<defs>
<linearGradient id="gpin" x1="0" y1="0" x2="0" y2="1"><stop offset="0" stop-color="#e59c88"/><stop offset="1" stop-color="#c9654f"/></linearGradient>
<linearGradient id="gfold" x1="0" y1="0" x2="0" y2="1"><stop offset="0" stop-color="#8fb0da"/><stop offset="1" stop-color="#5b86be"/></linearGradient>
</defs>
<!-- hand -->
<g transform="translate(6.2,4.2) scale(1.4,1.46)"><path d="M4.2 13.5 C2.5 11 1.2 9.6 2.2 8.8 C3.2 8 4.6 9.6 5.4 10.8 V3.8 C5.4 2.4 7.6 2.4 7.6 3.8 V2.2 C7.6 0.6 10 0.6 10 2.2 V3 C10 1.6 12.3 1.6 12.3 3 V4.6 C12.3 3.4 14.4 3.4 14.4 4.8 V14 C14.4 17 13.4 18.2 13.4 19.6 H5.8 C5.8 17.4 5 15 4.2 13.5 Z" fill="#e6d6a6" stroke="#a99a6c" stroke-width="1"/><path d="M7.6 4v6M10 3.4v6.6M12.3 4.8v5.4" stroke="#b8a878" stroke-width=".8"/></g>
<!-- pin -->
<g transform="translate(48.6,5.4)"><path d="M10 0.8 C4.8 0.8 1.2 4.6 1.2 9.4 C1.2 15 7.6 19.6 10 27.6 C12.4 19.6 18.8 15 18.8 9.4 C18.8 4.6 15.2 0.8 10 0.8 Z" fill="url(#gpin)" stroke="#b5503c" stroke-width=".8"/><circle cx="10" cy="9.2" r="3.2" fill="#fff" stroke="#a8503e" stroke-width="1.3"/></g>
<!-- dashed rect -->
<rect x="91.8" y="11.6" width="16.6" height="16.2" fill="#a8cdf5" stroke="#4a72e0" stroke-width="1.1" stroke-dasharray="2.4 1.6"/>
<!-- polygon -->
<g transform="translate(132,8.6)"><path d="M2.2 2.6 H9.6 V7.2 H18.6 V18.6 H2.2 Z" fill="#7f9fc6" stroke="#27313c" stroke-width="1.5"/><g fill="#fff" stroke="#27313c" stroke-width="1"><rect x=".6" y="1" width="3.2" height="3.2"/><rect x="8" y="1" width="3.2" height="3.2"/><rect x="8" y="5.6" width="3.2" height="3.2"/><rect x="17" y="5.6" width="3.2" height="3.2"/><rect x="17" y="17" width="3.2" height="3.2"/><rect x=".6" y="17" width="3.2" height="3.2"/></g></g>
<!-- multi select -->
<g transform="translate(175,9)"><rect x="0.4" y="2" width="12" height="11.4" fill="#a4c8ee" stroke="#5f6b78" stroke-width="1" stroke-dasharray="1.4 1"/><rect x="6.6" y="8" width="12" height="11.4" fill="#cfe3f7" stroke="#5f6b78" stroke-width="1" stroke-dasharray="1.4 1"/><path d="M17.6 -2.4l2.6-2.2" stroke="#c9c39a" stroke-width="1.8"/></g>
<!-- folder -->
<g transform="translate(216,10)"><path d="M1 3.2 C1 2 1.6 1.6 2.4 1.6 H8.4 L10.2 3.6 H18 C19 3.6 19.4 4.2 19.4 5 V15.4 H1 Z" fill="#5f86bd"/><path d="M0.6 6.2 H20 L19 16.2 H1.4 Z" fill="url(#gfold)" stroke="#7fa2d2" stroke-width=".6"/></g>
<!-- file -->
<g transform="translate(261,9.6)"><path d="M1 0.8 H10.4 L14.8 5.2 V18.4 H1 Z" fill="#3f97e6" stroke="#2c7fd0" stroke-width=".8"/><path d="M10.4 .8 V5.2 H14.8 Z" fill="#a9d3f7"/><path d="M10.6 8.8 A3.4 3.4 0 1 0 11.2 13.4 M8.2 11.6h3.2v-2.6" stroke="#dff0ff" stroke-width="1.3" fill="none"/></g>
<!-- stacked pages -->
<g transform="translate(301,9.6)"><rect x="5.6" y=".8" width="13" height="12.6" rx="1.2" fill="#bcd6ee" stroke="#9ab9d8" stroke-width=".9"/><rect x="3.2" y="3.2" width="13" height="12.6" rx="1.2" fill="#b3d0ec" stroke="#9ab9d8" stroke-width=".9"/><rect x=".8" y="5.6" width="13" height="12.6" rx="1.2" fill="#aacbea" stroke="#94b5d6" stroke-width=".9"/></g>
<!-- broom -->
<g transform="translate(344,9)"><path d="M3.4 3.6 L9.6 9.8" stroke="#7a5a2a" stroke-width="4.2" stroke-linecap="round"/><path d="M5.4 10.4 L11.2 5.6 C14.6 7.8 17.4 11.4 19 15.4 C16 18 12 19.6 7.6 19.8 C8 16.6 7.2 13.2 5.4 10.4 Z" fill="#ecd95a" stroke="#cdb534" stroke-width=".8"/><path d="M5.4 10.4 L11.2 5.6 L12.8 7 L6.6 12.2 Z" fill="#c9a24a"/></g>
<!-- full extent -->
<g transform="translate(385.4,7.4) scale(0.83)"><rect x="1" y="1" width="25" height="25" rx="2.4" fill="#f2f4f5"/><rect x="4" y="4" width="19" height="19" fill="#9fd0e6"/><path d="M4 4 H15 L13 10 L16 16 L12 23 H4 Z" fill="#a6cf9c"/><path d="M9 6 L13 8 L12 14 L9 18 Z" fill="#cfe0a6"/><path d="M1.2 7.4 V1.2 H7.4 M19.6 1.2 H25.8 V7.4 M25.8 19.6 V25.8 H19.6 M7.4 25.8 H1.2 V19.6" stroke="#3a3f45" stroke-width="2.2" fill="none"/></g>
<!-- overview -->
<g transform="translate(426,8)"><rect x=".8" y=".8" width="21.6" height="21.6" fill="#f3f3f3" stroke="#9ea3a8" stroke-width="1.5"/><rect x="8.4" y="1.6" width="13.2" height="13" fill="#a9dcf3"/><path d="M11.4 9.6 L16 5 L19.4 3.2 L20.2 6 L15 10.8 Z" fill="#f0e6a8"/><path d="M8.2 1.4 V22 M8.2 14.8 H22" stroke="#9ea3a8" stroke-width="1.5"/></g>
</svg>
<div class="coord">( 37.93, 139.08)</div>
<div class="scale"><span class="km">45km</span><i class="bar"></i><i class="t1"></i><i class="t2"></i><i class="t3"></i><span class="mi">25mi</span></div>
</div>
<div id="bp">
<div class="bp-head"><span class="t">検索結果 検索件数: 3 表示件数: 3 <span class="k">フィルタ</span>件数: 0</span><svg class="pin" style="left:1545px;top:6px" width="10" height="14" viewBox="0 0 10 14"><path d="M2 0.6h6v1.2H7.4v5h1.8v1.5H0.8V6.8h1.8v-5H2z" fill="#36444f"/><path d="M3.5 1.8h1.6v5H3.5z" fill="#eef0f2"/><path d="M5 8.3v5" stroke="#36444f" stroke-width="1.3"/></svg></div>
<div class="bp-tool">
<span class="cb" style="left:12.6px;top:16px"></span><span class="cl" style="left:37px"><span class="k">チェック</span>行<span class="k">のみ</span>表示</span>
<span class="cb" style="left:142.6px;top:16px"></span><span class="cl" style="left:167px"><span class="k">ハイライト</span>一覧<span class="k">を</span>表示</span>
<span class="cb" style="left:287.4px;top:16px"></span><span class="cl" style="left:312px"><span class="k">ハイライト</span>行<span class="k">を</span>選択</span>
<div class="btn exp" style="left:426.6px;width:110.5px"><span><span class="k">エクスポート</span></span></div>
<div class="btn" style="left:544.5px;width:36px"><svg width="17.6" height="19.4" style="position:absolute;left:8.6px;top:3.6px" viewBox="0 0 20 22"><path d="M7 3.2V1.6h6v1.6" fill="none" stroke="#2c350c" stroke-width="1.6"/><path d="M1.5 4.2h17" stroke="#2c350c" stroke-width="2.2"/><path d="M3.6 6.2h12.8v12.6a1.6 1.6 0 0 1-1.6 1.6H5.2a1.6 1.6 0 0 1-1.6-1.6z" fill="none" stroke="#2c350c" stroke-width="1.7"/><path d="M7.3 8.6v9.4M10 8.6v9.4M12.7 8.6v9.4" stroke="#2c350c" stroke-width="1.5"/></svg></div>
</div>
<div class="grid">
<div class="gh"><span class="hcb"><i></i></span>
<div class="ht" style="left:137.4px;width:120px"><span><span class="k">シーン</span><span class="l">ID</span><b class="sa"></b></span></div>
<div class="ht" style="left:327.9px;width:84.0px"><span><span class="k">センサ</span><b class="sa"></b></span></div>
<div class="ht" style="left:411.9px;width:106.0px"><span>衛星種別<b class="sa"></b></span></div>
<div class="ht" style="left:517.9px;width:132.5px"><span>観測開始日時</span></div>
<div class="ht" style="left:650.4px;width:132.6px"><span>観測終了日時</span></div>
<div class="ht" style="left:783.0px;width:111.9px"><span>運用<span class="k">モード</span></span></div>
<div class="ht" style="left:894.9px;width:129.0px"><span>観測<span class="k">パス</span>番号</span></div>
<div class="ht" style="left:1023.9px;width:148.5px"><span>中心<span class="k">フレーム</span>番号</span></div>
</div>
<div class="gf">
<div class="fb" style="left:149.1px;width:178.6px"><span class="fi"><svg width="18" height="17" viewBox="0 0 18 17"><g stroke="#222" stroke-width="1.15"><path d="M1 1.5h5M1 3.8h5M1 6.1h5M1 8.4h5M1 10.7h5M1 13h5M1 15.3h5M12 1.5h5M12 3.8h5M12 6.1h5M12 8.4h5M12 10.7h5M12 13h5M12 15.3h5"/></g><rect x="6.8" y="0.8" width="1.8" height="15.2" fill="#9a9a9a"/><rect x="9.4" y="0.8" width="1.8" height="15.2" fill="#c4c4c4"/></svg></span><b class="da"></b></div>
<div class="fb" style="left:329.1px;width:82.6px"><span class="fi"><svg width="18" height="17" viewBox="0 0 18 17"><g stroke="#222" stroke-width="1.15"><path d="M1 1.5h5M1 3.8h5M1 6.1h5M1 8.4h5M1 10.7h5M1 13h5M1 15.3h5M12 1.5h5M12 3.8h5M12 6.1h5M12 8.4h5M12 10.7h5M12 13h5M12 15.3h5"/></g><rect x="6.8" y="0.8" width="1.8" height="15.2" fill="#9a9a9a"/><rect x="9.4" y="0.8" width="1.8" height="15.2" fill="#c4c4c4"/></svg></span><b class="da"></b></div>
<div class="fb" style="left:413.1px;width:104.6px"><span class="fi"><svg width="18" height="17" viewBox="0 0 18 17"><g stroke="#222" stroke-width="1.15"><path d="M1 1.5h5M1 3.8h5M1 6.1h5M1 8.4h5M1 10.7h5M1 13h5M1 15.3h5M12 1.5h5M12 3.8h5M12 6.1h5M12 8.4h5M12 10.7h5M12 13h5M12 15.3h5"/></g><rect x="6.8" y="0.8" width="1.8" height="15.2" fill="#9a9a9a"/><rect x="9.4" y="0.8" width="1.8" height="15.2" fill="#c4c4c4"/></svg></span><b class="da"></b></div>
<div class="fb" style="left:519.1px;width:131.1px"><span class="fi"><svg width="18" height="17" viewBox="0 0 18 17"><g stroke="#222" stroke-width="1.15"><path d="M1 1.5h5M1 3.8h5M1 6.1h5M1 8.4h5M1 10.7h5M1 13h5M1 15.3h5M12 1.5h5M12 3.8h5M12 6.1h5M12 8.4h5M12 10.7h5M12 13h5M12 15.3h5"/></g><rect x="6.8" y="0.8" width="1.8" height="15.2" fill="#9a9a9a"/><rect x="9.4" y="0.8" width="1.8" height="15.2" fill="#c4c4c4"/></svg></span><b class="da"></b></div>
<div class="fb" style="left:651.6px;width:131.2px"><span class="fi"><svg width="18" height="17" viewBox="0 0 18 17"><g stroke="#222" stroke-width="1.15"><path d="M1 1.5h5M1 3.8h5M1 6.1h5M1 8.4h5M1 10.7h5M1 13h5M1 15.3h5M12 1.5h5M12 3.8h5M12 6.1h5M12 8.4h5M12 10.7h5M12 13h5M12 15.3h5"/></g><rect x="6.8" y="0.8" width="1.8" height="15.2" fill="#9a9a9a"/><rect x="9.4" y="0.8" width="1.8" height="15.2" fill="#c4c4c4"/></svg></span><b class="da"></b></div>
<div class="fb" style="left:784.2px;width:110.5px"><span class="fi"><svg width="18" height="17" viewBox="0 0 18 17"><g stroke="#222" stroke-width="1.15"><path d="M1 1.5h5M1 3.8h5M1 6.1h5M1 8.4h5M1 10.7h5M1 13h5M1 15.3h5M12 1.5h5M12 3.8h5M12 6.1h5M12 8.4h5M12 10.7h5M12 13h5M12 15.3h5"/></g><rect x="6.8" y="0.8" width="1.8" height="15.2" fill="#9a9a9a"/><rect x="9.4" y="0.8" width="1.8" height="15.2" fill="#c4c4c4"/></svg></span><b class="da"></b></div>
<div class="fb" style="left:896.1px;width:127.6px"><span class="fi"><svg width="18" height="17" viewBox="0 0 18 17"><g stroke="#222" stroke-width="1.15"><path d="M1 1.5h5M1 3.8h5M1 6.1h5M1 8.4h5M1 10.7h5M1 13h5M1 15.3h5M12 1.5h5M12 3.8h5M12 6.1h5M12 8.4h5M12 10.7h5M12 13h5M12 15.3h5"/></g><rect x="6.8" y="0.8" width="1.8" height="15.2" fill="#9a9a9a"/><rect x="9.4" y="0.8" width="1.8" height="15.2" fill="#c4c4c4"/></svg></span><b class="da"></b></div>
<div class="fb" style="left:1025.1px;width:147.1px"><span class="fi"><svg width="18" height="17" viewBox="0 0 18 17"><g stroke="#222" stroke-width="1.15"><path d="M1 1.5h5M1 3.8h5M1 6.1h5M1 8.4h5M1 10.7h5M1 13h5M1 15.3h5M12 1.5h5M12 3.8h5M12 6.1h5M12 8.4h5M12 10.7h5M12 13h5M12 15.3h5"/></g><rect x="6.8" y="0.8" width="1.8" height="15.2" fill="#9a9a9a"/><rect x="9.4" y="0.8" width="1.8" height="15.2" fill="#c4c4c4"/></svg></span><b class="da"></b></div>
</div>
<div class="gr" style="top:62.4px">
<i class="vl" style="left:36.9px"></i>
<i class="vl" style="left:73.7px"></i>
<i class="vl" style="left:110.8px"></i>
<svg class="mg" width="19" height="19" viewBox="0 0 20 20"><circle cx="8" cy="8" r="5.4" fill="none" stroke="#8e8e8e" stroke-width="3.7"/><path d="M12.6 12.6L16 16" stroke="#8e8e8e" stroke-width="4.7" stroke-linecap="round"/></svg>
<span class="cb rc"></span>
<svg class="sat" width="19" height="21" viewBox="0 0 19 21"><path d="M1.8 1 C-0.2 7.5 3 15.2 11.2 16.8 L15.6 15.4 Z" fill="#4e8a0c"/><path d="M8.6 8.4 L16.8 1.8" stroke="#4e8a0c" stroke-width="1.5"/><path d="M9.6 4.4l1 1M13.8 8.4l.8 1.4" stroke="#7db83a" stroke-width=".9"/><path d="M4.6 15 C2.6 16.6 1.8 18 1.8 19.6 H15.4" fill="none" stroke="#4e8a0c" stroke-width="1.3"/></svg>
<div class="gc" style="left:147.9px;width:180.0px">ALOS2188812860-171121</div>
<div class="gc" style="left:327.9px;width:84.0px">PALSAR-2</div>
<div class="gc" style="left:411.9px;width:106.0px">ALOS-2</div>
<div class="gc" style="left:517.9px;width:132.5px">2017/11/21 02:48:57</div>
<div class="gc" style="left:650.4px;width:132.6px">2017/11/21 02:50:25</div>
<div class="gc" style="left:783.0px;width:111.9px">SM1</div>
<div class="gc" style="left:894.9px;width:129.0px">19</div>
<div class="gc" style="left:1023.9px;width:148.5px">2860</div>
<i class="vl" style="left:1172.4px"></i>
</div>
<div class="gr hl" style="top:89.8px">
<i class="vl" style="left:36.9px"></i>
<i class="vl" style="left:73.7px"></i>
<i class="vl" style="left:110.8px"></i>
<svg class="mg" width="19" height="19" viewBox="0 0 20 20"><circle cx="8" cy="8" r="5.4" fill="none" stroke="#8e8e8e" stroke-width="3.7"/><path d="M12.6 12.6L16 16" stroke="#8e8e8e" stroke-width="4.7" stroke-linecap="round"/></svg>
<span class="cb rc on"></span>
<svg class="ck" width="20" height="20" viewBox="0 0 20 20"><path d="M4.2 10.2 L7.8 15 C9.6 9.6 12.4 5.6 16.2 2.4" fill="none" stroke="#0a0a14" stroke-width="2.2" stroke-linejoin="round"/></svg>
<svg class="sat" width="19" height="21" viewBox="0 0 19 21"><path d="M1.8 1 C-0.2 7.5 3 15.2 11.2 16.8 L15.6 15.4 Z" fill="#4e8a0c"/><path d="M8.6 8.4 L16.8 1.8" stroke="#4e8a0c" stroke-width="1.5"/><path d="M9.6 4.4l1 1M13.8 8.4l.8 1.4" stroke="#7db83a" stroke-width=".9"/><path d="M4.6 15 C2.6 16.6 1.8 18 1.8 19.6 H15.4" fill="none" stroke="#4e8a0c" stroke-width="1.3"/></svg>
<div class="gc" style="left:147.9px;width:180.0px">ALOS2188812870-171121</div>
<div class="gc" style="left:327.9px;width:84.0px">PALSAR-2</div>
<div class="gc" style="left:411.9px;width:106.0px">ALOS-2</div>
<div class="gc" style="left:517.9px;width:132.5px">2017/11/21 02:48:57</div>
<div class="gc" style="left:650.4px;width:132.6px">2017/11/21 02:50:25</div>
<div class="gc" style="left:783.0px;width:111.9px">SM1</div>
<div class="gc" style="left:894.9px;width:129.0px">19</div>
<div class="gc" style="left:1023.9px;width:148.5px">2870</div>
<i class="vl" style="left:1172.4px"></i>
</div>
<div class="gr" style="top:117.3px">
<i class="vl" style="left:36.9px"></i>
<i class="vl" style="left:73.7px"></i>
<i class="vl" style="left:110.8px"></i>
<svg class="mg" width="19" height="19" viewBox="0 0 20 20"><circle cx="8" cy="8" r="5.4" fill="none" stroke="#8e8e8e" stroke-width="3.7"/><path d="M12.6 12.6L16 16" stroke="#8e8e8e" stroke-width="4.7" stroke-linecap="round"/></svg>
<span class="cb rc"></span>
<svg class="sat" width="19" height="21" viewBox="0 0 19 21"><path d="M1.8 1 C-0.2 7.5 3 15.2 11.2 16.8 L15.6 15.4 Z" fill="#4e8a0c"/><path d="M8.6 8.4 L16.8 1.8" stroke="#4e8a0c" stroke-width="1.5"/><path d="M9.6 4.4l1 1M13.8 8.4l.8 1.4" stroke="#7db83a" stroke-width=".9"/><path d="M4.6 15 C2.6 16.6 1.8 18 1.8 19.6 H15.4" fill="none" stroke="#4e8a0c" stroke-width="1.3"/></svg>
<div class="gc" style="left:147.9px;width:180.0px">ALOS2188812880-171121</div>
<div class="gc" style="left:327.9px;width:84.0px">PALSAR-2</div>
<div class="gc" style="left:411.9px;width:106.0px">ALOS-2</div>
<div class="gc" style="left:517.9px;width:132.5px">2017/11/21 02:48:57</div>
<div class="gc" style="left:650.4px;width:132.6px">2017/11/21 02:50:25</div>
<div class="gc" style="left:783.0px;width:111.9px">SM1</div>
<div class="gc" style="left:894.9px;width:129.0px">19</div>
<div class="gc" style="left:1023.9px;width:148.5px">2880</div>
<i class="vl" style="left:1172.4px"></i>
</div>
</div>
<div class="jaxa">©JAXA</div>
</div>
<div id="rp">
<div class="rp-head"><span class="rp-title"><span class="k">シーン</span>詳細</span><svg class="pin" style="left:410.6px;top:6.4px" width="10" height="14" viewBox="0 0 10 14"><path d="M2 0.6h6v1.2H7.4v5h1.8v1.5H0.8V6.8h1.8v-5H2z" fill="#36444f"/><path d="M3.5 1.8h1.6v5H3.5z" fill="#eef0f2"/><path d="M5 8.3v5" stroke="#36444f" stroke-width="1.3"/></svg></div>
<div class="rp-img"><span class="lbl">画像</span><div class="ibtn" style="left:372px"><svg style="position:absolute;left:1px;top:5.5px" width="25" height="24" viewBox="0 0 24 21" preserveAspectRatio="none">
<path d="M2.5 15.6 L6 12.4 H18 L21.5 15.6 Z" fill="#c9e23a"/><path d="M12 12.4 H18 L21.5 15.6 H13 Z" fill="#f1ee9a"/><rect x="2.5" y="15.6" width="19" height="2.3" fill="#1c5cae"/>
<path d="M2.5 11 L6 7.8 H18 L21.5 11 Z" fill="#8cc8f4" stroke="#3c8ee0" stroke-width=".7"/><rect x="2.5" y="11" width="19" height="2" fill="#2f7fd6"/>
<path d="M2.5 6.8 L6.4 2.2 H17.6 L21.5 6.8 Z" fill="#a5d6f8" stroke="#4a9ae6" stroke-width=".7"/><rect x="2.5" y="6.8" width="19" height="2" fill="#3f8fe2"/>
<rect x="7.4" y="3.4" width="3.4" height="2.2" fill="#ea2a1c"/><rect x="12.8" y="2.6" width="3.6" height="2.2" fill="#ea2a1c"/>
</svg></div><div class="ibtn" style="left:402px"><svg style="position:absolute;left:2.6px;top:8px" width="19" height="19" viewBox="0 0 20 20"><circle cx="7.8" cy="7.8" r="5.1" fill="none" stroke="#8b8b8b" stroke-width="3.4"/><path d="M12 12L16.2 16.2" stroke="#8b8b8b" stroke-width="4.4" stroke-linecap="round"/></svg></div></div>
<div class="rp-blank"></div>
<div class="rp-split"><i></i><i></i></div>
<div class="pg">
<div class="pg-head"><div class="c1">項目名</div><div class="c2">値</div><div class="c3"></div></div>
<div class="pg-body">
<div class="r alt sel"><div class="c1"><span class="k">センサ</span></div><div class="c2">PALSAR-2</div></div>
<div class="r"><div class="c1">運用<span class="k">モード</span></div><div class="c2">SM1</div></div>
<div class="r alt"><div class="c1"><span class="k">シーン</span><span class="l">ID</span></div><div class="c2" style="letter-spacing:-.22px">ALOS2188812870-171121</div></div>
<div class="r"><div class="c1">観測<span class="k">パス</span>番号</div><div class="c2">19</div></div>
<div class="r alt"><div class="c1">中心<span class="k">フレーム</span>番号</div><div class="c2">2870</div></div>
<div class="r"><div class="c1">軌道<span class="k">データ</span>種別<span class="l">(</span><span class="k">シーン</span>情報作成時<span class="l">)</span></div><div class="c2"></div></div>
<div class="r alt"><div class="c1">観測開始日時</div><div class="c2">2017/11/21 02:48:57</div></div>
<div class="r"><div class="c1">観測終了日時</div><div class="c2">2017/11/21 02:50:25</div></div>
<div class="r alt"><div class="c1">衛星種別</div><div class="c2">ALOS-2</div></div>
<div class="r"><div class="c1">衛星進行方向</div><div class="c2"><span class="k">ディセンディング</span></div></div>
<div class="r alt"><div class="c1">観測方向</div><div class="c2">右側観測</div></div>
<div class="r"><div class="c1"><span class="k">ポインティング</span>角<span class="l">(N)</span></div><div class="c2"></div></div>
<div class="r alt"><div class="c1"><span class="k">ポインティング</span>角<span class="l">(F)</span></div><div class="c2"></div></div>
<div class="r"><div class="c1"><span class="k">ポインティング</span>角<span class="l">(B)</span></div><div class="c2"></div></div>
<div class="r alt"><div class="c1"><span class="k">ポインティング</span>角</div><div class="c2">0</div></div>
<div class="r"><div class="c1"><span class="k">オフナディア</span>角</div><div class="c2">35.4</div></div>
<div class="r alt"><div class="c1">偏波</div><div class="c2">HH</div></div>
<div class="r"><div class="c1"><span class="k">テーブル</span>番号</div><div class="c2">1158</div></div>
<div class="r alt"><div class="c1"><span class="k">ビーム</span><span class="l">No</span></div><div class="c2">U2-8</div></div>
<div class="r"><div class="c1"><span class="l">REV</span>補正</div><div class="c2"></div></div>
<div class="r alt"><div class="c1"><span class="k">ゲイン</span><span class="l">(N)</span></div><div class="c2"></div></div>
<div class="r"><div class="c1"><span class="k">ゲイン</span><span class="l">(F)</span></div><div class="c2"></div></div>
<div class="r alt"><div class="c1"><span class="k">ゲイン</span><span class="l">(B)</span></div><div class="c2"></div></div>
<div class="r"><div class="c1"><span class="k">ゲインステータス</span></div><div class="c2"></div></div>
<div class="r alt"><div class="c1">位置<span class="l">X</span>成分</div><div class="c2">-4553.665887</div></div>
<div class="r"><div class="c1">位置<span class="l">Y</span>成分</div><div class="c2">3401.399787</div></div>
<div class="r alt"><div class="c1">位置<span class="l">Z</span>成分</div><div class="c2">4095.596488</div></div>
<div class="r"><div class="c1">速度<span class="l">X</span>成分</div><div class="c2">-2.473968</div></div>
<div class="r alt"><div class="c1">速度<span class="l">Y</span>成分</div><div class="c2">3.965173</div></div>
<div class="r"><div class="c1">速度<span class="l">Z</span>成分</div><div class="c2">-6.026203</div></div>
<div class="r alt"><div class="c1"><span class="k">シーン</span>開始日</div><div class="c2">2017/11/21</div></div>
<div class="r"><div class="c1"><span class="k">シーン</span>開始時刻</div><div class="c2">02:49:32.098</div></div>
<div class="r alt"><div class="c1"><span class="k">シーン</span>中心日</div><div class="c2">2017/11/21</div></div>
<div class="r"><div class="c1"><span class="k">シーン</span>中心時刻</div><div class="c2">02:49:37.201</div></div>
<div class="r alt"><div class="c1"><span class="k">シーン</span>中心緯度</div><div class="c2">37.111</div></div>
</div>
<div class="vs"><div class="arr up"></div><div class="thumb"></div><div class="arr dn"></div></div>
<div class="hs"><div class="arr lf"></div><div class="thumb"></div><div class="arr rt"></div></div>
<div class="corner"></div>
</div></div>
<div class="botw"></div>
</body></html>
